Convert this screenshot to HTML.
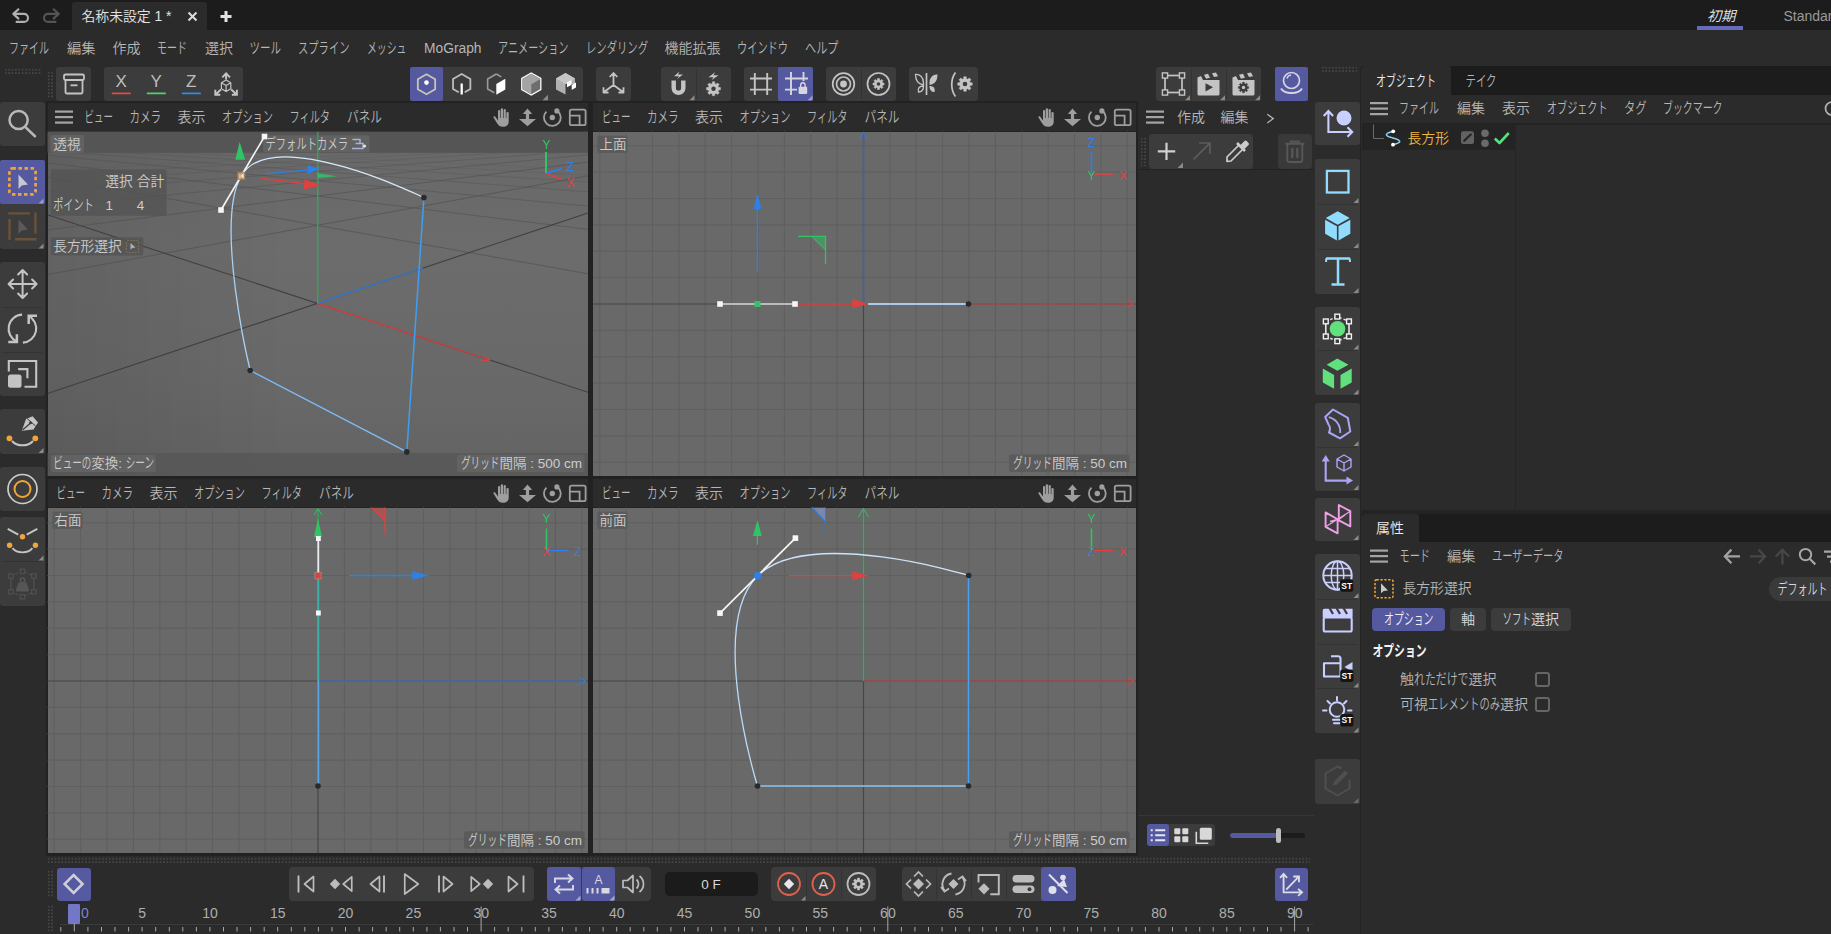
<!DOCTYPE html>
<html lang="ja"><head><meta charset="utf-8"><title>名称未設定 1 * - Cinema 4D</title>
<style>
html,body{margin:0;padding:0;background:#2b2b2b;}
body{width:1831px;height:934px;position:relative;overflow:hidden;font-family:"Liberation Sans","Noto Sans CJK JP",sans-serif;}
#ui div{position:absolute;box-sizing:border-box;}
svg.ov{position:absolute;left:0;top:0;}
svg.ov text{font-family:"Liberation Sans","Noto Sans CJK JP",sans-serif;font-weight:350;}
</style></head><body>
<div id="ui">
<div style="left:0px;top:0px;width:1831px;height:30px;background:#1c1c1c;"></div>
<div style="left:72px;top:2px;width:135px;height:28px;background:#2b2b2b;border-radius:3px 3px 0 0;"></div>
<div style="left:1697px;top:25.8px;width:46px;height:3.8px;background:#676cba;"></div>
<div style="left:56px;top:67px;width:35px;height:33.5px;background:#3c3c3c;border-radius:3px;"></div>
<div style="left:104px;top:67px;width:139px;height:33.5px;background:#3c3c3c;border-radius:3px;"></div>
<div style="left:410px;top:67px;width:173px;height:33.5px;background:#3c3c3c;border-radius:3px;"></div>
<div style="left:410px;top:67px;width:33px;height:33.5px;background:#5459a0;border-radius:2px;"></div>
<div style="left:596px;top:67px;width:35px;height:33.5px;background:#3c3c3c;border-radius:3px;"></div>
<div style="left:661px;top:67px;width:70px;height:33.5px;background:#3c3c3c;border-radius:3px;"></div>
<div style="left:695.5px;top:69px;width:1px;height:29.5px;background:#333;"></div>
<div style="left:744px;top:67px;width:69px;height:33.5px;background:#3c3c3c;border-radius:3px;"></div>
<div style="left:778px;top:67px;width:35px;height:33.5px;background:#5459a0;border-radius:2px;"></div>
<div style="left:826px;top:67px;width:70px;height:33.5px;background:#3c3c3c;border-radius:3px;"></div>
<div style="left:860.5px;top:69px;width:1px;height:29.5px;background:#333;"></div>
<div style="left:909px;top:67px;width:69px;height:33.5px;background:#3c3c3c;border-radius:3px;"></div>
<div style="left:1156px;top:67px;width:105px;height:33.5px;background:#3c3c3c;border-radius:3px;"></div>
<div style="left:1191px;top:69px;width:1px;height:29.5px;background:#333;"></div>
<div style="left:1226px;top:69px;width:1px;height:29.5px;background:#333;"></div>
<div style="left:1275px;top:67px;width:33px;height:33.5px;background:#3c3c3c;border-radius:3px;"></div>
<div style="left:1275px;top:67px;width:33px;height:33.5px;background:#5459a0;border-radius:2px;"></div>
<div style="left:0px;top:102px;width:44.5px;height:43.5px;background:#3c3c3c;border-radius:3px;"></div>
<div style="left:0px;top:160px;width:44.5px;height:89px;background:#3c3c3c;border-radius:3px;"></div>
<div style="left:0px;top:160px;width:44.5px;height:44px;background:#5459a0;border-radius:2px;"></div>
<div style="left:0px;top:262px;width:44.5px;height:134px;background:#3c3c3c;border-radius:3px;"></div>
<div style="left:2px;top:306.5px;width:40px;height:1px;background:#333;"></div>
<div style="left:2px;top:351.5px;width:40px;height:1px;background:#333;"></div>
<div style="left:0px;top:409px;width:44.5px;height:44.5px;background:#3c3c3c;border-radius:3px;"></div>
<div style="left:0px;top:466.5px;width:44.5px;height:44px;background:#3c3c3c;border-radius:3px;"></div>
<div style="left:0px;top:517px;width:44.5px;height:88.5px;background:#3c3c3c;border-radius:3px;"></div>
<div style="left:2px;top:561px;width:40px;height:1px;background:#333;"></div>
<div style="left:1315px;top:102px;width:44.5px;height:43px;background:#3c3c3c;border-radius:3px;"></div>
<div style="left:1315px;top:159px;width:44.5px;height:134.5px;background:#3c3c3c;border-radius:3px;"></div>
<div style="left:1315px;top:306.8px;width:44.5px;height:88.7px;background:#3c3c3c;border-radius:3px;"></div>
<div style="left:1315px;top:402.5px;width:44.5px;height:88px;background:#3c3c3c;border-radius:3px;"></div>
<div style="left:1315px;top:497.5px;width:44.5px;height:43px;background:#3c3c3c;border-radius:3px;"></div>
<div style="left:1315px;top:554px;width:44.5px;height:179px;background:#3c3c3c;border-radius:3px;"></div>
<div style="left:1315px;top:759px;width:44.5px;height:44.5px;background:#3c3c3c;border-radius:3px;"></div>
<div style="left:1317px;top:203.5px;width:40px;height:1px;background:#333;"></div>
<div style="left:1317px;top:248.5px;width:40px;height:1px;background:#333;"></div>
<div style="left:1317px;top:350px;width:40px;height:1px;background:#333;"></div>
<div style="left:1317px;top:446.5px;width:40px;height:1px;background:#333;"></div>
<div style="left:1317px;top:598.5px;width:40px;height:1px;background:#333;"></div>
<div style="left:1317px;top:643.5px;width:40px;height:1px;background:#333;"></div>
<div style="left:1317px;top:688px;width:40px;height:1px;background:#333;"></div>
<div style="left:45.5px;top:101px;width:1092.5px;height:754.8px;background:#222222;"></div>
<div style="left:47.5px;top:103px;width:540.5px;height:28px;background:#2b2b2b;"></div>
<div style="left:47.5px;top:131.5px;width:540.5px;height:344.5px;background:linear-gradient(90deg,rgba(0,0,0,.09) 0%,rgba(0,0,0,0) 45%),linear-gradient(#686868 0%,#6c6c6c 35%,#696969 70%,#636363 100%);"></div>
<div style="left:593px;top:103px;width:542.5px;height:28px;background:#2b2b2b;"></div>
<div style="left:593px;top:131.5px;width:542.5px;height:344.5px;background:#696969;"></div>
<div style="left:47.5px;top:479px;width:540.5px;height:28px;background:#2b2b2b;"></div>
<div style="left:47.5px;top:507.5px;width:540.5px;height:345.5px;background:#696969;"></div>
<div style="left:593px;top:479px;width:542.5px;height:28px;background:#2b2b2b;"></div>
<div style="left:593px;top:507.5px;width:542.5px;height:345.5px;background:#696969;"></div>
<div style="left:1138px;top:103px;width:175.5px;height:754px;background:#2b2b2b;"></div>
<div style="left:1149px;top:134.2px;width:104px;height:34.5px;background:#3c3c3c;border-radius:4px;"></div>
<div style="left:1278px;top:134.2px;width:34px;height:34.5px;background:#393939;border-radius:4px;"></div>
<div style="left:1138px;top:169.3px;width:175.5px;height:1.2px;background:#222;"></div>
<div style="left:1146.8px;top:824.2px;width:68px;height:22.3px;background:#3c3c3c;border-radius:3px;"></div>
<div style="left:1146.8px;top:824.2px;width:22.6px;height:22.3px;background:#5459a0;border-radius:3px;"></div>
<div style="left:1230px;top:833px;width:74.6px;height:5px;background:#1c1c1c;border-radius:2.5px;"></div>
<div style="left:1230px;top:833px;width:47px;height:5px;background:#5459a0;border-radius:2.5px;"></div>
<div style="left:1276px;top:827.8px;width:5px;height:15.2px;background:#bdbdbd;border-radius:2.5px;"></div>
<div style="left:1361.5px;top:66.2px;width:469.5px;height:28.8px;background:#1c1c1c;"></div>
<div style="left:1361.5px;top:66.2px;width:89.5px;height:28.8px;background:#2b2b2b;border-radius:3px 3px 0 0;"></div>
<div style="left:1361.5px;top:123px;width:469.5px;height:1.5px;background:#232323;"></div>
<div style="left:1361.5px;top:124.3px;width:153.5px;height:26.2px;background:#242424;"></div>
<div style="left:1515px;top:125px;width:1px;height:385px;background:#242424;"></div>
<div style="left:1361.5px;top:510px;width:469.5px;height:4px;background:#232323;"></div>
<div style="left:1359.7px;top:66.5px;width:1.8px;height:870px;background:#232323;"></div>
<div style="left:1361.5px;top:514px;width:469.5px;height:28px;background:#1c1c1c;"></div>
<div style="left:1361.5px;top:514px;width:57.5px;height:28px;background:#2b2b2b;border-radius:3px 3px 0 0;"></div>
<div style="left:1768.5px;top:577px;width:80px;height:23.8px;background:#3a3a3a;border-radius:12px;"></div>
<div style="left:1372px;top:608px;width:73px;height:23px;background:#5459a0;border-radius:4px;"></div>
<div style="left:1450px;top:608px;width:36px;height:23px;background:#3c3c3c;border-radius:4px;"></div>
<div style="left:1491px;top:608px;width:80px;height:23px;background:#3c3c3c;border-radius:4px;"></div>
<div style="left:1534.5px;top:671.5px;width:15.5px;height:15.5px;border:2px solid #666;border-radius:3px;background:#2b2b2b"></div>
<div style="left:1534.5px;top:696.5px;width:15.5px;height:15.5px;border:2px solid #666;border-radius:3px;background:#2b2b2b"></div>
<div style="left:57px;top:867.5px;width:33.5px;height:33px;background:#5459a0;border-radius:3px;"></div>
<div style="left:289px;top:867px;width:244.5px;height:34px;background:#3c3c3c;border-radius:4px;"></div>
<div style="left:547px;top:867px;width:104px;height:34px;background:#3c3c3c;border-radius:4px;"></div>
<div style="left:547px;top:867px;width:34px;height:34px;background:#5459a0;border-radius:3px;"></div>
<div style="left:581.5px;top:867px;width:33.5px;height:34px;background:#5459a0;border-radius:3px;"></div>
<div style="left:664.5px;top:872.3px;width:93px;height:23.5px;background:#1b1b1b;border-radius:5px;"></div>
<div style="left:771.3px;top:867px;width:104.3px;height:34px;background:#3c3c3c;border-radius:4px;"></div>
<div style="left:901.5px;top:867px;width:174px;height:34px;background:#3c3c3c;border-radius:4px;"></div>
<div style="left:1041px;top:867px;width:34.5px;height:34px;background:#5459a0;border-radius:3px;"></div>
<div style="left:1275px;top:867.5px;width:33px;height:33px;background:#5459a0;border-radius:3px;"></div>
<div style="left:806px;top:869px;width:1px;height:30px;background:#333;"></div>
<div style="left:841px;top:869px;width:1px;height:30px;background:#333;"></div>
<div style="left:936px;top:869px;width:1px;height:30px;background:#333;"></div>
<div style="left:971px;top:869px;width:1px;height:30px;background:#333;"></div>
<div style="left:1006px;top:869px;width:1px;height:30px;background:#333;"></div>
<div style="left:1138px;top:814.5px;width:175.5px;height:1px;background:#363636;"></div>
<div style="left:60px;top:924px;width:1253px;height:1px;background:#3b3b3b;"></div>
<div style="left:68px;top:904px;width:12px;height:19.5px;background:#7277c6;border-radius:1px;"></div>
<div style="left:4px;top:67.5px;width:38px;height:7.0px;background-image:radial-gradient(circle,#454545 0.9px,transparent 1.1px);background-size:3.4px 3.4px"></div>
<div style="left:47px;top:71px;width:7px;height:27px;background-image:radial-gradient(circle,#454545 0.9px,transparent 1.1px);background-size:3.4px 3.4px"></div>
<div style="left:1321px;top:66px;width:36px;height:7px;background-image:radial-gradient(circle,#454545 0.9px,transparent 1.1px);background-size:3.4px 3.4px"></div>
<div style="left:47px;top:856.6px;width:1263px;height:7.0px;background-image:radial-gradient(circle,#454545 0.9px,transparent 1.1px);background-size:3.4px 3.4px"></div>
<div style="left:47px;top:870px;width:7px;height:28px;background-image:radial-gradient(circle,#454545 0.9px,transparent 1.1px);background-size:3.4px 3.4px"></div>
<div style="left:47px;top:905px;width:7px;height:27px;background-image:radial-gradient(circle,#454545 0.9px,transparent 1.1px);background-size:3.4px 3.4px"></div>
<div style="left:1140px;top:137px;width:6.5px;height:29px;background-image:radial-gradient(circle,#454545 0.9px,transparent 1.1px);background-size:3.4px 3.4px"></div>
</div>
<svg class="ov" width="1831" height="934" viewBox="0 0 1831 934" fill="none">
<rect x="55" y="110.5" width="18" height="2.2" fill="#a4a4a4"/>
<rect x="55" y="116.0" width="18" height="2.2" fill="#a4a4a4"/>
<rect x="55" y="121.5" width="18" height="2.2" fill="#a4a4a4"/>
<path d="M599.8,131.5V476M626.1,131.5V476M652.5,131.5V476M678.9,131.5V476M705.2,131.5V476M731.6,131.5V476M758.0,131.5V476M784.4,131.5V476M810.8,131.5V476M837.1,131.5V476M889.9,131.5V476M916.2,131.5V476M942.6,131.5V476M969.0,131.5V476M995.4,131.5V476M1021.8,131.5V476M1048.1,131.5V476M1074.5,131.5V476M1100.9,131.5V476M1127.2,131.5V476M593,145.8H1135.5M593,172.1H1135.5M593,198.5H1135.5M593,224.9H1135.5M593,251.2H1135.5M593,277.6H1135.5M593,330.4H1135.5M593,356.8H1135.5M593,383.1H1135.5M593,409.5H1135.5M593,435.9H1135.5M593,462.2H1135.5" stroke="#5f5f5f" stroke-width="1" fill="none"/>
<path d="M863.5,131.5V476M593,304H1135.5" stroke="#474747" stroke-width="1.2" fill="none"/>
<path d="M54.2,507.5V853M80.6,507.5V853M107.0,507.5V853M133.4,507.5V853M159.8,507.5V853M186.1,507.5V853M212.5,507.5V853M238.9,507.5V853M265.2,507.5V853M291.6,507.5V853M344.4,507.5V853M370.8,507.5V853M397.1,507.5V853M423.5,507.5V853M449.9,507.5V853M476.2,507.5V853M502.6,507.5V853M529.0,507.5V853M555.4,507.5V853M581.8,507.5V853M47.5,522.8H588M47.5,549.1H588M47.5,575.5H588M47.5,601.9H588M47.5,628.2H588M47.5,654.6H588M47.5,707.4H588M47.5,733.8H588M47.5,760.1H588M47.5,786.5H588M47.5,812.9H588M47.5,839.2H588" stroke="#5f5f5f" stroke-width="1" fill="none"/>
<path d="M318,507.5V853M47.5,681H588" stroke="#474747" stroke-width="1.2" fill="none"/>
<path d="M599.8,507.5V853M626.1,507.5V853M652.5,507.5V853M678.9,507.5V853M705.2,507.5V853M731.6,507.5V853M758.0,507.5V853M784.4,507.5V853M810.8,507.5V853M837.1,507.5V853M889.9,507.5V853M916.2,507.5V853M942.6,507.5V853M969.0,507.5V853M995.4,507.5V853M1021.8,507.5V853M1048.1,507.5V853M1074.5,507.5V853M1100.9,507.5V853M1127.2,507.5V853M593,522.8H1135.5M593,549.1H1135.5M593,575.5H1135.5M593,601.9H1135.5M593,628.2H1135.5M593,654.6H1135.5M593,707.4H1135.5M593,733.8H1135.5M593,760.1H1135.5M593,786.5H1135.5M593,812.9H1135.5M593,839.2H1135.5" stroke="#5f5f5f" stroke-width="1" fill="none"/>
<path d="M863.5,507.5V853M593,681H1135.5" stroke="#474747" stroke-width="1.2" fill="none"/>
<clipPath id="cp"><rect x="47.5" y="131.5" width="540.5" height="344.5"/></clipPath>
<g clip-path="url(#cp)">
<line x1="47.5" y1="177.0" x2="588" y2="273.8" stroke="#505050" stroke-width="1" opacity="0.68"/>
<line x1="47.5" y1="274.6" x2="588" y2="175.9" stroke="#505050" stroke-width="1" opacity="0.68"/>
<line x1="47.5" y1="162.8" x2="588" y2="229.4" stroke="#505050" stroke-width="1" opacity="0.58"/>
<line x1="47.5" y1="229.9" x2="588" y2="162.1" stroke="#505050" stroke-width="1" opacity="0.58"/>
<line x1="47.5" y1="155.4" x2="588" y2="206.1" stroke="#505050" stroke-width="1" opacity="0.48"/>
<line x1="47.5" y1="206.5" x2="588" y2="154.8" stroke="#505050" stroke-width="1" opacity="0.48"/>
<line x1="47.5" y1="150.8" x2="588" y2="191.8" stroke="#505050" stroke-width="1" opacity="0.38"/>
<line x1="47.5" y1="192.1" x2="588" y2="150.4" stroke="#505050" stroke-width="1" opacity="0.38"/>
<line x1="47.5" y1="147.7" x2="588" y2="182.1" stroke="#505050" stroke-width="1" opacity="0.28"/>
<line x1="47.5" y1="182.3" x2="588" y2="147.3" stroke="#505050" stroke-width="1" opacity="0.28"/>
<line x1="47.5" y1="145.5" x2="588" y2="175.1" stroke="#505050" stroke-width="1" opacity="0.18"/>
<line x1="47.5" y1="175.3" x2="588" y2="145.1" stroke="#505050" stroke-width="1" opacity="0.18"/>
<line x1="47.5" y1="143.8" x2="588" y2="169.8" stroke="#505050" stroke-width="1" opacity="0.1"/>
<line x1="47.5" y1="170.0" x2="588" y2="143.5" stroke="#505050" stroke-width="1" opacity="0.1"/>
<line x1="47.5" y1="214.8" x2="588" y2="392.3" stroke="#404040" stroke-width="1.1" opacity="1"/>
<line x1="47.5" y1="393.6" x2="588" y2="212.9" stroke="#404040" stroke-width="1.1" opacity="1"/>
</g>
<rect x="47.5" y="131.5" width="540.5" height="21.3" fill="#555"/>
<rect x="47.5" y="453" width="540.5" height="23" fill="#555" opacity=".75"/>
<rect x="50.5" y="135" width="33.5" height="18" rx="2.5" fill="#626262" opacity="1"/>
<rect x="263" y="135.3" width="106.69999999999999" height="17.0" rx="2.5" fill="#626262" opacity="1"/>
<rect x="51" y="169.5" width="115.5" height="46.19999999999999" rx="2.5" fill="#545454" opacity="0.8"/>
<rect x="51" y="237.3" width="92.30000000000001" height="18.299999999999983" rx="2.5" fill="#545454" opacity="0.8"/>
<rect x="50.8" y="454.7" width="105.00000000000001" height="17.5" rx="2.5" fill="#626262" opacity="1"/>
<rect x="457.0" y="454.6" width="127.5" height="17.5" rx="2.5" fill="#626262" opacity="1"/>
<rect x="1009.0" y="454.6" width="120.5" height="17.5" rx="2.5" fill="#5b5b5b" opacity="1"/>
<rect x="464.0" y="831.3" width="120.5" height="17.5" rx="2.5" fill="#5b5b5b" opacity="1"/>
<rect x="1009.0" y="831.3" width="120.5" height="17.5" rx="2.5" fill="#5b5b5b" opacity="1"/>
<rect x="597.3" y="135.8" width="30.299999999999955" height="17.19999999999999" rx="2.5" fill="#5b5b5b" opacity="1"/>
<rect x="52.3" y="511.8" width="30.299999999999997" height="17.19999999999999" rx="2.5" fill="#5b5b5b" opacity="1"/>
<rect x="597.3" y="511.8" width="30.299999999999955" height="17.19999999999999" rx="2.5" fill="#5b5b5b" opacity="1"/>
<g clip-path="url(#cp)">
<line x1="317.3" y1="303.4" x2="490" y2="360" stroke="#e0413f" stroke-width="1.2"/>
<path d="M483,354.5L490,360L481.5,360.5" stroke="#e0413f" fill="none" stroke-width="1"/>
<line x1="317.3" y1="303.4" x2="423" y2="268" stroke="#2f7fe6" stroke-width="1.2"/>
<line x1="317.8" y1="131.5" x2="317.8" y2="303.4" stroke="#3da45e" stroke-width="1.3"/>
<path d="M241.3,175.8C214.1,221.6 250.2,370.5 250.2,370.5" stroke="#a9d2f7" stroke-width="1.3" fill="none"/>
<path d="M250.2,370.5L406.8,451.9" stroke="#7dbcf5" stroke-width="1.4" fill="none"/>
<path d="M406.8,451.9L423.9,197.6" stroke="#3f9ff2" stroke-width="1.5" fill="none"/>
<path d="M241.3,175.8C272.4,123.1 423.9,197.6 423.9,197.6" stroke="#d4e9fc" stroke-width="1.3" fill="none"/>
<line x1="264.5" y1="136.5" x2="221" y2="210" stroke="#f4f4f4" stroke-width="1.6"/>
<rect x="261.7" y="133.7" width="5.6" height="5.6" fill="#f6f6f6"/>
<rect x="218.2" y="207.2" width="5.6" height="5.6" fill="#f6f6f6"/>
<circle cx="423.9" cy="197.6" r="2.8" fill="#2a2a2a"/>
<circle cx="406.8" cy="451.9" r="2.8" fill="#2a2a2a"/>
<circle cx="250.2" cy="370.5" r="2.8" fill="#2a2a2a"/>
<rect x="237.8" y="172.3" width="7" height="7" fill="#d99a55" stroke="#8f8578" stroke-width="1" opacity=".9"/>
<path d="M239.8,174v4M243.3,174l-2.6,2l2.6,2z" stroke="#f0e0d0" fill="#f0e0d0" stroke-width=".7"/>
<path d="M239.6,141.8L235.4,159.8H245.2Z" fill="#2fc566"/>
<line x1="265" y1="173.9" x2="310" y2="169.9" stroke="#2f7fe6" stroke-width="1.3"/>
<path d="M320,169L307.5,165.3V173.9Z" fill="#2f7fe6"/>
<line x1="261" y1="178.5" x2="306" y2="183.7" stroke="#e0413f" stroke-width="1.3"/>
<path d="M320.6,185.3L304.5,179.2L303.5,189.5Z" fill="#e0413f"/>
<path d="M317.3,173.2L337,176.2L318,178Z" fill="#2fc566" opacity=".85"/>
<path d="M546,173.4V152" stroke="#2fc566" stroke-width="2"/><path d="M546,173.4L561.6,168.5" stroke="#2f7fe6" stroke-width="1.6"/><path d="M546,173.4L561.6,179.3" stroke="#e0413f" stroke-width="1.6"/>
</g>
<line x1="863.5" y1="304" x2="863.5" y2="133" stroke="#2c64cf" stroke-width="1.3"/><path d="M859.5,139L863.5,132.5L867.5,139" stroke="#2f7fe6" fill="none"/>
<line x1="863.5" y1="304" x2="1134" y2="304" stroke="#c44a48" stroke-width="1.2"/><path d="M1127,299.5L1134,304L1127,307.5" stroke="#e0413f" fill="none"/>
<line x1="720" y1="304" x2="795" y2="304" stroke="#dedede" stroke-width="1.5"/>
<line x1="868" y1="304" x2="968.5" y2="304" stroke="#a9c8ea" stroke-width="1.8"/>
<line x1="795" y1="304" x2="858" y2="304" stroke="#e0413f" stroke-width="1.4"/><path d="M868.5,304L852.3,299V308Z" fill="#e0413f"/>
<line x1="757.5" y1="272" x2="757.5" y2="205" stroke="#2f7fe6" stroke-width="1.3"/><path d="M757.5,193L753.6,209H761.4Z" fill="#2f7fe6"/>
<path d="M798,236.3H825.5V264" stroke="#2fc566" stroke-width="1.3" fill="none"/><path d="M811.5,236.3H825.5V250Z" fill="#2fc566" opacity=".45"/><path d="M811.5,236.3L825.5,250" stroke="#2fc566" stroke-width="1"/>
<rect x="717.2" y="301.2" width="5.6" height="5.6" fill="#f6f6f6"/>
<rect x="792.2" y="301.2" width="5.6" height="5.6" fill="#f6f6f6"/>
<rect x="754.5" y="301" width="6" height="6" fill="#2fc566"/>
<circle cx="968.5" cy="304" r="2.8" fill="#2a2a2a"/>
<path d="M1091.5,174V152" stroke="#2f7fe6" stroke-width="1.6"/><path d="M1091.5,174H1113.5" stroke="#e0413f" stroke-width="1.6"/>
<path d="M546.5,550.5V528.5" stroke="#2fc566" stroke-width="1.6"/><path d="M546.5,550.5H568.5" stroke="#2f7fe6" stroke-width="1.6"/>
<path d="M1091.5,550.5V528.5" stroke="#2fc566" stroke-width="1.6"/><path d="M1091.5,550.5H1113.5" stroke="#e0413f" stroke-width="1.6"/>
<line x1="318" y1="681" x2="318" y2="509" stroke="#2fc566" stroke-width="1.2"/><path d="M314,515L318,508.5L322,515" stroke="#2fc566" fill="none"/>
<line x1="318" y1="681" x2="586" y2="681" stroke="#3a78d8" stroke-width="1.2"/><path d="M579,677L586,681L579,685" stroke="#2f7fe6" fill="none"/>
<line x1="318.3" y1="681" x2="318.3" y2="786" stroke="#58a8ea" stroke-width="1.8"/>
<line x1="318.3" y1="575" x2="318.3" y2="681" stroke="#3fb0a8" stroke-width="1.8"/>
<line x1="318.3" y1="538" x2="318.3" y2="575" stroke="#e8eef0" stroke-width="1.8"/>
<path d="M318,518.5L314,537H322Z" fill="#2fc566"/>
<line x1="349" y1="575.5" x2="414" y2="575.5" stroke="#2f7fe6" stroke-width="1.3"/><path d="M429.5,575.5L412.5,571.2V579.8Z" fill="#2f7fe6"/>
<path d="M385,507.5V534.5" stroke="#e0413f" stroke-width="1.3"/><path d="M371.5,507.5H385V521Z" fill="#e0413f" opacity=".5"/><path d="M371.5,507.5L385,521" stroke="#e0413f" stroke-width="1"/>
<rect x="316" y="536.0" width="4.8" height="5" fill="#f6f6f6"/>
<rect x="316" y="610.5" width="4.8" height="5" fill="#f6f6f6"/>
<rect x="314.8" y="572.5" width="6.4" height="6.4" fill="#e0413f" stroke="#999" stroke-width=".6"/>
<circle cx="318" cy="786" r="2.8" fill="#2a2a2a"/>
<line x1="863.5" y1="681" x2="863.5" y2="509" stroke="#2fb05e" stroke-width="1.3"/><path d="M858.5,517L863.5,508.5L868.5,517" stroke="#2fc566" fill="none"/>
<line x1="863.5" y1="681" x2="1134" y2="681" stroke="#c44a48" stroke-width="1.2"/><path d="M1127,677L1134,681L1127,685" stroke="#e0413f" fill="none"/>
<path d="M757.7,575.8C707.2,625.8 757.5,786 757.5,786" stroke="#b9dafa" stroke-width="1.3" fill="none"/>
<path d="M757.5,786H968.5" stroke="#8cc6f5" stroke-width="1.4" fill="none"/>
<path d="M968.5,786V575.5" stroke="#45a3f3" stroke-width="1.5" fill="none"/>
<path d="M757.7,575.8C808,526 968.7,575.5 968.7,575.5" stroke="#cbe4fb" stroke-width="1.3" fill="none"/>
<line x1="795.4" y1="538.1" x2="720" y2="613.1" stroke="#f6f6f6" stroke-width="1.7"/>
<rect x="792.6" y="535.3000000000001" width="5.6" height="5.6" fill="#f8f8f8"/>
<rect x="717.2" y="610.3000000000001" width="5.6" height="5.6" fill="#f8f8f8"/>
<circle cx="968.7" cy="575.5" r="2.8" fill="#2a2a2a"/>
<circle cx="968.5" cy="786" r="2.8" fill="#2a2a2a"/>
<circle cx="757.5" cy="786" r="2.8" fill="#2a2a2a"/>
<circle cx="757.7" cy="575.8" r="3.8" fill="#2f7fe6"/>
<path d="M757.4,520L753,536H761.8Z" fill="#2fc566"/><line x1="757.4" y1="536" x2="757.4" y2="544.7" stroke="#2fc566" stroke-width="1.2"/>
<line x1="788.5" y1="575.7" x2="853" y2="575.7" stroke="#e0413f" stroke-width="1.3"/><path d="M868.8,575.7L852.4,571.3V580.1Z" fill="#e0413f"/>
<path d="M825.3,507.5V534.8" stroke="#3a6fd0" stroke-width="1.3"/><path d="M812.2,507.5H825.3V521.4Z" fill="#8fa8e8" opacity=".5"/><path d="M812.2,507.5L825.3,521.4" stroke="#2f7fe6" stroke-width="1.2"/>
<rect x="1146" y="110.5" width="18" height="2.2" fill="#a4a4a4"/>
<rect x="1146" y="116.0" width="18" height="2.2" fill="#a4a4a4"/>
<rect x="1146" y="121.5" width="18" height="2.2" fill="#a4a4a4"/>
<path d="M1267.3,114.3L1273.3,118.6L1267.3,123" stroke="#b4b4b4" stroke-width="1.3" fill="none"/>
<rect x="1370" y="102.0" width="18" height="2.2" fill="#a4a4a4"/>
<rect x="1370" y="107.5" width="18" height="2.2" fill="#a4a4a4"/>
<rect x="1370" y="113.0" width="18" height="2.2" fill="#a4a4a4"/>
<rect x="1370" y="549.5" width="18" height="2.2" fill="#a4a4a4"/>
<rect x="1370" y="555.0" width="18" height="2.2" fill="#a4a4a4"/>
<rect x="1370" y="560.5" width="18" height="2.2" fill="#a4a4a4"/>
<path d="M60.8,927V931.5M74.3,923.5V931.5M87.9,927V931.5M101.5,927V931.5M115.0,927V931.5M128.6,927V931.5M142.1,927V931.5M155.7,927V931.5M169.3,927V931.5M182.8,927V931.5M196.4,927V931.5M209.9,927V931.5M223.5,927V931.5M237.0,927V931.5M250.6,927V931.5M264.2,927V931.5M277.7,927V931.5M291.3,927V931.5M304.8,927V931.5M318.4,927V931.5M332.0,927V931.5M345.5,927V931.5M359.1,927V931.5M372.6,927V931.5M386.2,927V931.5M399.7,927V931.5M413.3,927V931.5M426.9,927V931.5M440.4,927V931.5M454.0,927V931.5M467.5,927V931.5M481.1,906.5V931.5M494.6,927V931.5M508.2,927V931.5M521.8,927V931.5M535.3,927V931.5M548.9,927V931.5M562.4,927V931.5M576.0,927V931.5M589.6,927V931.5M603.1,927V931.5M616.7,927V931.5M630.2,927V931.5M643.8,927V931.5M657.3,927V931.5M670.9,927V931.5M684.5,927V931.5M698.0,927V931.5M711.6,927V931.5M725.1,927V931.5M738.7,927V931.5M752.2,927V931.5M765.8,927V931.5M779.4,927V931.5M792.9,927V931.5M806.5,927V931.5M820.0,927V931.5M833.6,927V931.5M847.2,927V931.5M860.7,927V931.5M874.3,927V931.5M887.8,906.5V931.5M901.4,927V931.5M914.9,927V931.5M928.5,927V931.5M942.1,927V931.5M955.6,927V931.5M969.2,927V931.5M982.7,927V931.5M996.3,927V931.5M1009.9,927V931.5M1023.4,927V931.5M1037.0,927V931.5M1050.5,927V931.5M1064.1,927V931.5M1077.6,927V931.5M1091.2,927V931.5M1104.8,927V931.5M1118.3,927V931.5M1131.9,927V931.5M1145.4,927V931.5M1159.0,927V931.5M1172.5,927V931.5M1186.1,927V931.5M1199.7,927V931.5M1213.2,927V931.5M1226.8,927V931.5M1240.3,927V931.5M1253.9,927V931.5M1267.5,927V931.5M1281.0,927V931.5M1294.6,906.5V931.5M1308.1,927V931.5" stroke="#a8a8a8" stroke-width="1" fill="none"/>
<path d="M19,8.7L13.3,13.9L19,19.1M13.8,13.9H24a4,4 0 0 1 0,8H15.7" stroke="#b0b0b0" stroke-width="2.1" fill="none" stroke-linejoin="round"/>
<path d="M53,8.7L58.7,13.9L53,19.1M58.2,13.9H48a4,4 0 0 0 0,8H56.3" stroke="#555" stroke-width="2.1" fill="none" stroke-linejoin="round"/>
<path d="M188.5,12.5l8,8M196.5,12.5l-8,8" stroke="#dcdcdc" stroke-width="2"/>
<path d="M220.5,16.5h11M226,11.1v10.8" stroke="#e2e2e2" stroke-width="3"/>
<rect x="64" y="74.5" width="20" height="5.5" rx="1.5" stroke="#c4c4c4" stroke-width="1.8"/><path d="M65.5,80V92.2a1.3,1.3 0 0 0 1.3,1.3H81.2a1.3,1.3 0 0 0 1.3,-1.3V80" stroke="#c4c4c4" stroke-width="1.8"/><path d="M70.5,85.3h7" stroke="#c4c4c4" stroke-width="1.8"/>
<rect x="111.6" y="92.6" width="19.4" height="1.7" rx=".8" fill="#e2494a"/>
<rect x="146.60000000000002" y="92.6" width="19.4" height="1.7" rx=".8" fill="#4fd469"/>
<rect x="181.60000000000002" y="92.6" width="19.4" height="1.7" rx=".8" fill="#2f8ae8"/>
<path d="M226.1,80L230.8,82.8V88.8L226.1,91.6L221.4,88.8V82.8ZM221.4,82.8L226.1,85.6L230.8,82.8M226.1,85.6V91.6" stroke="#c4c4c4" stroke-width="1.2" stroke-linejoin="round"/><path d="M226.1,79.5V74M222.3,77.3L226.1,73.3L229.9,77.3M221,89.5L216,94M215.3,89.8V94.8H220.3M231.2,89.5L236.2,94M236.9,89.8V94.8H231.9" stroke="#c4c4c4" stroke-width="1.9"/>
<g transform="translate(426.5,84.2) scale(1)" ><path d="M0.00,-10.00L8.66,-5.00L8.66,5.00L0.00,10.00L-8.66,5.00L-8.66,-5.00Z" stroke="#c8c4b8" stroke-width="1.8"/><circle cx="0" cy="-1.6" r="2.3" fill="#fff"/></g>
<g transform="translate(461.7,84) scale(1)" ><path d="M3,8.3L8.66,5V-5L0,-10L-8.66,-5V5L-3,8.3" stroke="#bdbdbd" stroke-width="1.8"/><path d="M0,-0.5V10.5" stroke="#fff" stroke-width="2.3"/></g>
<g transform="translate(496.3,84) scale(1)" ><path d="M0,-10L-8.66,-5V5L-2,8.8M0,-10L5,-7.1" stroke="#9a9a9a" stroke-width="1.6"/><path d="M0,0L9,-5.2V5.5L0,10.7Z" fill="#fff"/></g>
<g transform="translate(531.3,84) scale(1)" ><path d="M0.00,-10.20L8.83,-5.10L8.83,5.10L0.00,10.20L-8.83,5.10L-8.83,-5.10Z" fill="#a4a4a4"/><path d="M0,0.3L8.8,-4.8V5.1L0,10.2Z" fill="#6e6e6e"/><path d="M0.00,-11.00L9.53,-5.50L9.53,5.50L0.00,11.00L-9.53,5.50L-9.53,-5.50Z" stroke="#fff" stroke-width="1.3"/></g>
<path d="M548,100.3v-5.5l-5.5,5.5z" fill="#8a8a8a"/>
<g transform="translate(565.5,84) scale(1)" ><path d="M0,-11L9.5,-5.5V0H0V10.5L-9.5,5.5V-5.5Z" fill="#b0b0b0"/><path d="M0,0L9.5,-5.5L0,-11L-9.5,-5.5Z" fill="#c6c6c6"/><path d="M1.5,-1.5L6,-4V1L1.5,3.5ZM6,1L10.5,-1.5V3.5L6,6Z" fill="#fff"/><path d="M1.5,3.5L6,1V6L1.5,8.5Z" fill="#3c3c3c"/></g>
<g transform="translate(613.5,84) scale(1)" ><path d="M0,1V-10.5M-3.8,-7L0,-11L3.8,-7M0,1L-9.5,8M-10,3.3V8.5H-5M0,1L9.5,8M10,3.3V8.5H5" stroke="#c4c4c4" stroke-width="1.8" stroke-linejoin="round"/></g>
<g transform="translate(678.5,85) scale(1)" ><path d="M-7,-4.5V3a7,7 0 0 0 14,0V-4.5H2.6V3a2.6,2.6 0 0 1 -5.2,0V-4.5Z" fill="#c4c4c4"/><path d="M-7.5,-5.5h5.4M2.1,-5.5h5.4" stroke="#3c3c3c" stroke-width="1.2"/><path d="M1,-13.5L-4.5,-8.8H0.5L-1.5,-6L4.5,-10.5H-0.5Z" fill="#c4c4c4"/></g>
<path d="M694.5,100.3v-5l-5,5z" fill="#8a8a8a"/>
<g transform="translate(713.5,88.7) scale(1)" ><path d="M5.03,-1.25L6.91,-1.15L6.91,1.15L5.03,1.25L4.44,2.67L5.70,4.07L4.07,5.70L2.67,4.44L1.25,5.03L1.15,6.91L-1.15,6.91L-1.25,5.03L-2.67,4.44L-4.07,5.70L-5.70,4.07L-4.44,2.67L-5.03,1.25L-6.91,1.15L-6.91,-1.15L-5.03,-1.25L-4.44,-2.67L-5.70,-4.07L-4.07,-5.70L-2.67,-4.44L-1.25,-5.03L-1.15,-6.91L1.15,-6.91L1.25,-5.03L2.67,-4.44L4.07,-5.70L5.70,-4.07L4.44,-2.67Z" fill="#c4c4c4" stroke="#c4c4c4" stroke-width=".6" stroke-linejoin="round"/><circle r="2.24" fill="#3c3c3c"/><path d="M1.5,-16.5L-5,-11.5H0L-2,-8.5L5,-13.5H0Z" fill="#c4c4c4"/></g>
<g transform="translate(761,84) scale(1)" ><path d="M-6.2,-11V11M6.2,-11V11M-11,-5.5H11M-11,5.6H11" stroke="#c4c4c4" stroke-width="1.9"/></g>
<g transform="translate(797,84) scale(1)" ><path d="M-6,-12V11M6.5,-12V-3M-12,-5.5H11M-12,5.6H0" stroke="#d6d6e0" stroke-width="1.9"/><rect x="1.6" y="2.8" width="8.6" height="7.2" rx="1" fill="#d6d6e0"/><path d="M3.7,3V1a2.2,2.2 0 0 1 4.4,0V3" stroke="#d6d6e0" stroke-width="1.4"/></g>
<path d="M812.5,100.3v-5l-5,5z" fill="#9a9cc8"/>
<g transform="translate(843.5,84) scale(1)" ><circle r="10.8" stroke="#c4c4c4" stroke-width="1.7"/><circle r="7" stroke="#c4c4c4" stroke-width="1.7"/><circle r="3.4" fill="#c4c4c4"/></g>
<g transform="translate(878.5,84) scale(1)" ><circle r="11" stroke="#c4c4c4" stroke-width="1.7"/><path d="M4.02,-1.00L5.52,-0.92L5.52,0.92L4.02,1.00L3.55,2.14L4.56,3.26L3.26,4.56L2.14,3.55L1.00,4.02L0.92,5.52L-0.92,5.52L-1.00,4.02L-2.14,3.55L-3.26,4.56L-4.56,3.26L-3.55,2.14L-4.02,1.00L-5.52,0.92L-5.52,-0.92L-4.02,-1.00L-3.55,-2.14L-4.56,-3.26L-3.26,-4.56L-2.14,-3.55L-1.00,-4.02L-0.92,-5.52L0.92,-5.52L1.00,-4.02L2.14,-3.55L3.26,-4.56L4.56,-3.26L3.55,-2.14Z" fill="#c4c4c4" stroke="#c4c4c4" stroke-width=".6" stroke-linejoin="round"/><circle r="1.79" fill="#3c3c3c"/></g>
<g transform="translate(926.5,84) scale(1)" ><path d="M0,-11V11" stroke="#c4c4c4" stroke-width="1.7"/><path d="M3,-1C3,-7 7,-10 11,-9.5C11,-4 9,0 3,1ZM3,2C7,2 9,4 8,8C5,8 3,6 3,2Z" fill="#c4c4c4"/><path d="M-3,-1C-3,-7 -7,-10 -11,-9.5C-11,-4 -9,0 -3,1ZM-3,2C-7,2 -9,4 -8,8C-5,8 -3,6 -3,2Z" stroke="#c4c4c4" stroke-width="1.3"/></g>
<g transform="translate(965,84) scale(1)" ><path d="M5.24,-1.30L7.20,-1.20L7.20,1.20L5.24,1.30L4.63,2.79L5.94,4.24L4.24,5.94L2.79,4.63L1.30,5.24L1.20,7.20L-1.20,7.20L-1.30,5.24L-2.79,4.63L-4.24,5.94L-5.94,4.24L-4.63,2.79L-5.24,1.30L-7.20,1.20L-7.20,-1.20L-5.24,-1.30L-4.63,-2.79L-5.94,-4.24L-4.24,-5.94L-2.79,-4.63L-1.30,-5.24L-1.20,-7.20L1.20,-7.20L1.30,-5.24L2.79,-4.63L4.24,-5.94L5.94,-4.24L4.63,-2.79Z" fill="#c4c4c4" stroke="#c4c4c4" stroke-width=".6" stroke-linejoin="round"/><circle r="2.34" fill="#3c3c3c"/><path d="M-9.5,-11.5C-14.5,-5 -14.5,6 -9.5,12.5" stroke="#c4c4c4" stroke-width="1.7"/></g>
<g transform="translate(1173.5,84) scale(1)" ><rect x="-8.5" y="-8.5" width="17" height="17" stroke="#c4c4c4" stroke-width="1.7"/><rect x="-11.1" y="-11.1" width="5.2" height="5.2" fill="#3c3c3c" stroke="#c4c4c4" stroke-width="1.4"/><rect x="-11.1" y="5.9" width="5.2" height="5.2" fill="#3c3c3c" stroke="#c4c4c4" stroke-width="1.4"/><rect x="5.9" y="-11.1" width="5.2" height="5.2" fill="#3c3c3c" stroke="#c4c4c4" stroke-width="1.4"/><rect x="5.9" y="5.9" width="5.2" height="5.2" fill="#3c3c3c" stroke="#c4c4c4" stroke-width="1.4"/></g>
<path d="M1190,100.3v-5l-5,5z" fill="#8a8a8a"/>
<g transform="translate(1208.5,84.5) scale(1)" ><path d="M-11,-4.5H11V9.5a1.5,1.5 0 0 1 -1.5,1.5H-9.5a1.5,1.5 0 0 1 -1.5,-1.5Z" fill="#c4c4c4"/><path d="M-11,-5.5V-8.5L-7.5,-10L-5.5,-6ZM-4.5,-11.2L-0.5,-12.3L1.5,-8.3L-2.5,-7.2ZM3.5,-12.8L7.5,-13.6L9.5,-9.8L5.5,-9Z" fill="#c4c4c4" transform="translate(0,1.5)"/><path d="M-3,-1.3V7L4.5,2.8Z" fill="#3c3c3c"/></g>
<path d="M1225,100.3v-5l-5,5z" fill="#8a8a8a"/>
<g transform="translate(1243.5,84.5) scale(1)" ><path d="M-11,-4.5H11V9.5a1.5,1.5 0 0 1 -1.5,1.5H-9.5a1.5,1.5 0 0 1 -1.5,-1.5Z" fill="#c4c4c4"/><path d="M-11,-5.5V-8.5L-7.5,-10L-5.5,-6ZM-4.5,-11.2L-0.5,-12.3L1.5,-8.3L-2.5,-7.2ZM3.5,-12.8L7.5,-13.6L9.5,-9.8L5.5,-9Z" fill="#c4c4c4" transform="translate(0,1.5)"/><g transform="translate(0,3)"><path d="M3.73,-0.93L5.13,-0.85L5.13,0.85L3.73,0.93L3.30,1.98L4.23,3.02L3.02,4.23L1.98,3.30L0.93,3.73L0.85,5.13L-0.85,5.13L-0.93,3.73L-1.98,3.30L-3.02,4.23L-4.23,3.02L-3.30,1.98L-3.73,0.93L-5.13,0.85L-5.13,-0.85L-3.73,-0.93L-3.30,-1.98L-4.23,-3.02L-3.02,-4.23L-1.98,-3.30L-0.93,-3.73L-0.85,-5.13L0.85,-5.13L0.93,-3.73L1.98,-3.30L3.02,-4.23L4.23,-3.02L3.30,-1.98Z" fill="#3c3c3c" stroke="#3c3c3c" stroke-width=".6" stroke-linejoin="round"/><circle r="1.70" fill="#c4c4c4"/></g></g>
<path d="M1260,100.3v-5l-5,5z" fill="#8a8a8a"/>
<g transform="translate(1291.5,83) scale(1)" ><circle cy="-2.5" r="8" stroke="#d4d4e0" stroke-width="1.7"/><path d="M-4.5,-4.5a4.5,4.5 0 0 1 4,-3.5" stroke="#d4d4e0" stroke-width="1.4"/><path d="M-10.5,5.5C-7,11.5 7,11.5 10.5,5.5" stroke="#d4d4e0" stroke-width="1.9"/></g>
<g transform="translate(493.4,117.4) scale(1)" ><path d="M4.6,1.5V-6.3a1.05,1.05 0 0 1 2.1,0V0.5H7.3V-7.9a1.15,1.15 0 0 1 2.3,0V0.5H10.2V-7.3a1.1,1.1 0 0 1 2.2,0V0.8H13V-4.3a1.15,1.15 0 0 1 2.3,0V4C15.3,7.5 13,9.4 9.5,9.4C6.5,9.4 4.8,8 3.2,5.2L0.1,0.2C-0.3,-0.9 1,-1.6 1.9,-0.6L4.6,3Z" fill="#9e9e9e"/></g>
<g transform="translate(527.5,117.3) scale(1)" ><path d="M0,-8.7L4.7,-3.3H1.6V1.8H8.5L0,9L-8.5,1.8H-1.6V-3.3H-4.7Z" fill="#9e9e9e"/></g>
<g transform="translate(552.3,117.5) scale(1)" ><path d="M5.6,-6.3A8.4,8.4 0 1 1 -5.9,-5.9" stroke="#9e9e9e" stroke-width="1.8"/><circle cx="4.6" cy="-6.6" r="2.6" fill="#9e9e9e"/><circle r="2.7" fill="#9e9e9e"/></g>
<g transform="translate(577.7,117.4) scale(1)" ><rect x="-7.9" y="-7.8" width="15.8" height="15.6" rx="1.8" stroke="#9e9e9e" stroke-width="1.8"/><path d="M-7.9,-1.8H1.9V7.8" stroke="#9e9e9e" stroke-width="1.8"/></g>
<g transform="translate(1038.4,117.4) scale(1)" ><path d="M4.6,1.5V-6.3a1.05,1.05 0 0 1 2.1,0V0.5H7.3V-7.9a1.15,1.15 0 0 1 2.3,0V0.5H10.2V-7.3a1.1,1.1 0 0 1 2.2,0V0.8H13V-4.3a1.15,1.15 0 0 1 2.3,0V4C15.3,7.5 13,9.4 9.5,9.4C6.5,9.4 4.8,8 3.2,5.2L0.1,0.2C-0.3,-0.9 1,-1.6 1.9,-0.6L4.6,3Z" fill="#9e9e9e"/></g>
<g transform="translate(1072.5,117.3) scale(1)" ><path d="M0,-8.7L4.7,-3.3H1.6V1.8H8.5L0,9L-8.5,1.8H-1.6V-3.3H-4.7Z" fill="#9e9e9e"/></g>
<g transform="translate(1097.3,117.5) scale(1)" ><path d="M5.6,-6.3A8.4,8.4 0 1 1 -5.9,-5.9" stroke="#9e9e9e" stroke-width="1.8"/><circle cx="4.6" cy="-6.6" r="2.6" fill="#9e9e9e"/><circle r="2.7" fill="#9e9e9e"/></g>
<g transform="translate(1122.7,117.4) scale(1)" ><rect x="-7.9" y="-7.8" width="15.8" height="15.6" rx="1.8" stroke="#9e9e9e" stroke-width="1.8"/><path d="M-7.9,-1.8H1.9V7.8" stroke="#9e9e9e" stroke-width="1.8"/></g>
<g transform="translate(493.4,493.4) scale(1)" ><path d="M4.6,1.5V-6.3a1.05,1.05 0 0 1 2.1,0V0.5H7.3V-7.9a1.15,1.15 0 0 1 2.3,0V0.5H10.2V-7.3a1.1,1.1 0 0 1 2.2,0V0.8H13V-4.3a1.15,1.15 0 0 1 2.3,0V4C15.3,7.5 13,9.4 9.5,9.4C6.5,9.4 4.8,8 3.2,5.2L0.1,0.2C-0.3,-0.9 1,-1.6 1.9,-0.6L4.6,3Z" fill="#9e9e9e"/></g>
<g transform="translate(527.5,493.3) scale(1)" ><path d="M0,-8.7L4.7,-3.3H1.6V1.8H8.5L0,9L-8.5,1.8H-1.6V-3.3H-4.7Z" fill="#9e9e9e"/></g>
<g transform="translate(552.3,493.5) scale(1)" ><path d="M5.6,-6.3A8.4,8.4 0 1 1 -5.9,-5.9" stroke="#9e9e9e" stroke-width="1.8"/><circle cx="4.6" cy="-6.6" r="2.6" fill="#9e9e9e"/><circle r="2.7" fill="#9e9e9e"/></g>
<g transform="translate(577.7,493.4) scale(1)" ><rect x="-7.9" y="-7.8" width="15.8" height="15.6" rx="1.8" stroke="#9e9e9e" stroke-width="1.8"/><path d="M-7.9,-1.8H1.9V7.8" stroke="#9e9e9e" stroke-width="1.8"/></g>
<g transform="translate(1038.4,493.4) scale(1)" ><path d="M4.6,1.5V-6.3a1.05,1.05 0 0 1 2.1,0V0.5H7.3V-7.9a1.15,1.15 0 0 1 2.3,0V0.5H10.2V-7.3a1.1,1.1 0 0 1 2.2,0V0.8H13V-4.3a1.15,1.15 0 0 1 2.3,0V4C15.3,7.5 13,9.4 9.5,9.4C6.5,9.4 4.8,8 3.2,5.2L0.1,0.2C-0.3,-0.9 1,-1.6 1.9,-0.6L4.6,3Z" fill="#9e9e9e"/></g>
<g transform="translate(1072.5,493.3) scale(1)" ><path d="M0,-8.7L4.7,-3.3H1.6V1.8H8.5L0,9L-8.5,1.8H-1.6V-3.3H-4.7Z" fill="#9e9e9e"/></g>
<g transform="translate(1097.3,493.5) scale(1)" ><path d="M5.6,-6.3A8.4,8.4 0 1 1 -5.9,-5.9" stroke="#9e9e9e" stroke-width="1.8"/><circle cx="4.6" cy="-6.6" r="2.6" fill="#9e9e9e"/><circle r="2.7" fill="#9e9e9e"/></g>
<g transform="translate(1122.7,493.4) scale(1)" ><rect x="-7.9" y="-7.8" width="15.8" height="15.6" rx="1.8" stroke="#9e9e9e" stroke-width="1.8"/><path d="M-7.9,-1.8H1.9V7.8" stroke="#9e9e9e" stroke-width="1.8"/></g>
<circle cx="18.6" cy="120" r="9.1" stroke="#b8b8b8" stroke-width="2.5"/><path d="M25.4,127.1L35,136.2" stroke="#b8b8b8" stroke-width="2.6" stroke-linecap="round"/>
<g transform="translate(22.5,181.4) scale(1)" ><rect x="-13.1" y="-13" width="26.2" height="26" rx="3" stroke="#f2a43c" stroke-width="2.7" stroke-dasharray="3.5 2.55"/><path d="M-4,-7V7.5L-0.8,4L5.5,3Z" fill="#c8c8cc"/></g>
<path d="M43.5,203.5v-5l-5,5z" fill="#9a9cc8"/>
<g transform="translate(22.5,227) scale(1)" ><path d="M-14.2,-13.6H7.5M12.9,-14.5V6.5M-7.5,12.3H14M-13,-8V13" stroke="#6a5238" stroke-width="2.4"/><path d="M-4,-7.5V7L-0.8,3.5L5.5,2.5Z" fill="#5a5a5a"/></g>
<path d="M43.5,248.5v-5l-5,5z" fill="#8a8a8a"/>
<g transform="translate(22.6,284) scale(1)" ><path d="M0,-13.5V13.5M-13.5,0H13.5M-4.5,-9.5L0,-14L4.5,-9.5M-4.5,9.5L0,14L4.5,9.5M-9.5,-4.5L-14,0L-9.5,4.5M9.5,-4.5L14,0L9.5,4.5" stroke="#c4c4c4" stroke-width="2" stroke-linejoin="round" stroke-linecap="round"/></g>
<path d="M22.1,314.6A14.1,14.1 0 0 0 16.6,341.4M22.9,342.6A14.1,14.1 0 0 0 28.4,315.9" stroke="#c4c4c4" stroke-width="2.1"/><path d="M16.9,334.2V342H8.3M37,315.8H28.7V323.9" stroke="#c4c4c4" stroke-width="2.5"/>
<path d="M8.8,371.5V361H36.2V386.7H24.5M18.2,369.1H27.4V378.2" stroke="#c4c4c4" stroke-width="2.1"/><rect x="8" y="374.5" width="13.5" height="13.3" rx="2.5" fill="#c4c4c4"/>
<path d="M12,441C17,446.8 28,446.8 33,441" stroke="#c4c4c4" stroke-width="2"/><circle cx="9.4" cy="438.3" r="2.9" fill="#f2a43c"/><circle cx="35.3" cy="438.3" r="2.9" fill="#f2a43c"/><path d="M21.8,430.8L26,419L32.6,416.2L38,422.5L33.5,429.5Z" fill="#c4c4c4"/><path d="M22.5,430L30.3,423.2" stroke="#3c3c3c" stroke-width="1.2"/><circle cx="30.6" cy="422.8" r="1.5" fill="#3c3c3c"/><path d="M27.2,418.7L35.6,426" stroke="#3c3c3c" stroke-width="1"/>
<path d="M43.5,453v-5l-5,5z" fill="#8a8a8a"/>
<g transform="translate(22.5,489) scale(1)" ><circle r="14.5" stroke="#cdcdcd" stroke-width="1.7"/><circle r="8" stroke="#f2a43c" stroke-width="2"/></g>
<path d="M7.7,528.8L18.3,534.7M37.3,528.8L26.7,534.7" stroke="#c4c4c4" stroke-width="1.9"/><path d="M12.5,548.2C17,553.8 28,553.8 32.4,548.2" stroke="#c4c4c4" stroke-width="1.9"/><circle cx="22.5" cy="536.7" r="2.7" fill="#f2a43c"/><circle cx="9.6" cy="545.2" r="2.7" fill="#f2a43c"/><circle cx="35.4" cy="545.2" r="2.7" fill="#f2a43c"/>
<path d="M43.5,560.5v-5l-5,5z" fill="#8a8a8a"/>
<path d="M10.9,576V591.8M33.8,576V591.8" stroke="#505050" stroke-width="1.3"/><path d="M10.9,576L22.5,571.3L33.8,576M10.9,591.8L22.5,596.7L33.8,591.8" stroke="#505050" stroke-width="1.2" stroke-dasharray="2.6 2.2"/><rect x="20.3" y="569.0999999999999" width="4.4" height="4.4" fill="#3c3c3c" stroke="#505050" stroke-width="1.2"/><rect x="31.599999999999998" y="573.8" width="4.4" height="4.4" fill="#3c3c3c" stroke="#505050" stroke-width="1.2"/><rect x="31.599999999999998" y="589.5999999999999" width="4.4" height="4.4" fill="#3c3c3c" stroke="#505050" stroke-width="1.2"/><rect x="20.3" y="594.5" width="4.4" height="4.4" fill="#3c3c3c" stroke="#505050" stroke-width="1.2"/><rect x="8.7" y="589.5999999999999" width="4.4" height="4.4" fill="#3c3c3c" stroke="#505050" stroke-width="1.2"/><rect x="8.7" y="573.8" width="4.4" height="4.4" fill="#3c3c3c" stroke="#505050" stroke-width="1.2"/><path d="M18.6,582.5H26.4L29,589.5a1.5,1.5 0 0 1 -1.5,2H17.5a1.5,1.5 0 0 1 -1.5,-2Z" fill="#565656"/><circle cx="22.5" cy="580.3" r="2.3" stroke="#565656" stroke-width="1.4"/>
<path d="M1328.4,112V132H1351M1323.7,116L1328.4,111L1333.1,116M1347.5,127.3L1352.2,132L1347.5,136.7" stroke="#c9cfff" stroke-width="2.1"/><circle cx="1344" cy="118" r="7.5" fill="#c9cfff"/>
<g transform="translate(1337.7,181.7) scale(1)" ><rect x="-10.8" y="-10.8" width="21.6" height="21.6" stroke="#8fdcff" stroke-width="2.3"/></g>
<path d="M1358.5,203v-5l-5,5z" fill="#8a8a8a"/>
<g transform="translate(1337.7,226) scale(1)" ><path d="M0,-14.8L12,-8L0,-1.2L-12,-8Z" fill="#8fdcff"/><path d="M-12.6,-6.3L-0.8,0.3V14.5L-12.6,7.8ZM12.6,-6.3L0.8,0.3V14.5L12.6,7.8Z" fill="#8fdcff"/></g>
<path d="M1358.5,248v-5l-5,5z" fill="#8a8a8a"/>
<g transform="translate(1338.0,271.5) scale(1)" ><path d="M-12,-13H12M0,-13V13M-6.5,13H6.5" stroke="#8fdcff" stroke-width="2.5"/><path d="M-11.9,-13V-9.5M11.9,-13V-9.5" stroke="#8fdcff" stroke-width="2"/></g>
<path d="M1358.5,293v-5l-5,5z" fill="#8a8a8a"/>
<circle cx="1337.5" cy="328.8" r="7.8" fill="#62e07e"/><path d="M1325.8,321.4V336.4M1349,321.4V336.4" stroke="#e6e6e6" stroke-width="1.6"/><path d="M1325.8,321.4L1337.3,316.6L1349,321.4M1325.8,336.4L1337.3,341.2L1349,336.4" stroke="#e6e6e6" stroke-width="1.4" stroke-dasharray="2.6 2.2"/><rect x="1334.8999999999999" y="314.20000000000005" width="4.8" height="4.8" fill="#3c3c3c" stroke="#f2f2f2" stroke-width="1.4"/><rect x="1346.6" y="319.0" width="4.8" height="4.8" fill="#3c3c3c" stroke="#f2f2f2" stroke-width="1.4"/><rect x="1346.6" y="334.0" width="4.8" height="4.8" fill="#3c3c3c" stroke="#f2f2f2" stroke-width="1.4"/><rect x="1334.8999999999999" y="338.8" width="4.8" height="4.8" fill="#3c3c3c" stroke="#f2f2f2" stroke-width="1.4"/><rect x="1323.3999999999999" y="334.0" width="4.8" height="4.8" fill="#3c3c3c" stroke="#f2f2f2" stroke-width="1.4"/><rect x="1323.3999999999999" y="319.0" width="4.8" height="4.8" fill="#3c3c3c" stroke="#f2f2f2" stroke-width="1.4"/>
<path d="M1358.5,349.5v-5l-5,5z" fill="#8a8a8a"/>
<path d="M1337.3,358.6L1348.5,364.7L1337.3,370.8L1326.6,364.7ZM1322.8,368.5L1334.1,374.9V388.8L1322.8,382.4ZM1351.7,368.5L1340.5,374.9V388.8L1351.7,382.4Z" fill="#62e07e"/>
<path d="M1358.5,394.5v-5l-5,5z" fill="#8a8a8a"/>
<path d="M1333,409.5L1347.8,417.8L1350.3,431.5L1340,438.3L1329,432.5C1331,428.5 1330,426.5 1328.5,424.5L1325.2,417Z" stroke="#aaa4f5" stroke-width="2" stroke-linejoin="round"/><path d="M1328.8,417.2C1336,419 1340.5,425 1340.3,433" stroke="#aaa4f5" stroke-width="1.8"/>
<path d="M1358.5,446v-5l-5,5z" fill="#8a8a8a"/>
<path d="M1325.7,459V480.6H1348" stroke="#aaa4f5" stroke-width="2.1"/><path d="M1325.7,455L1321.7,461.5H1329.7ZM1353,480.6L1346.5,476.6V484.6Z" fill="#aaa4f5"/><path d="M1344,455L1351,459V467L1344,471L1337,467V459ZM1337,459L1344,463L1351,459M1344,463V471" stroke="#aaa4f5" stroke-width="1.4" stroke-linejoin="round"/>
<path d="M1358.5,490v-5l-5,5z" fill="#8a8a8a"/>
<path d="M1325.6,512.4L1337.6,519.3V533.3L1325.6,526.8ZM1338.8,505L1350.3,511.2V526.4L1338.8,520.4Z" stroke="#f0a0e6" stroke-width="1.9" stroke-linejoin="round"/><path d="M1326,526.5L1350,511.5M1330,521.5L1337.5,519.5M1338.8,519.5L1345,515" stroke="#f0a0e6" stroke-width="1.3"/>
<path d="M1358.5,540v-5l-5,5z" fill="#8a8a8a"/>
<g transform="translate(1337.5,576.5) scale(1)" ><circle cx="0" cy="-1" r="14.2" stroke="#c9cfff" stroke-width="2"/><ellipse cx="0" cy="-1" rx="6.3" ry="14.2" stroke="#c9cfff" stroke-width="1.5"/><path d="M0,-15V13M-14,-1H14M-12.5,-8H12.5M-12.5,6H12.5" stroke="#c9cfff" stroke-width="1.5"/><rect x="2.5" y="2.8" width="13.3" height="12.5" rx="2.5" fill="#141414"/></g>
<path d="M1358.5,598v-5l-5,5z" fill="#8a8a8a"/>
<rect x="1323.7" y="617.5" width="28" height="14" rx="1.5" stroke="#c9cfff" stroke-width="2.1"/><path d="M1322.7,617.5V610.5a1.7,1.7 0 0 1 1.7,-1.7H1352.6V617.5Z" fill="#c9cfff"/><path d="M1329.5,608L1333,614M1336.5,608L1340,614M1343.5,608L1347,614" stroke="#3c3c3c" stroke-width="2.2"/>
<path d="M1331,656.3H1338a2.5,2.5 0 0 1 2.5,2.5V663M1324,663.3H1340.5V676.5H1324Z" stroke="#c9cfff" stroke-width="2.1" stroke-linejoin="round"/><path d="M1344.5,667L1352.5,662V672Z" fill="#c9cfff"/><rect x="1340.2" y="669.5" width="13.3" height="12.5" rx="2.5" fill="#141414"/>
<path d="M1358.5,687.5v-5l-5,5z" fill="#8a8a8a"/>
<circle cx="1337" cy="709.5" r="7.3" stroke="#c9cfff" stroke-width="2"/><path d="M1337,697V700.5M1327.5,701L1330,703.5M1346.5,701L1344,703.5M1323,710.5H1326.5M1348,710.5H1351.5M1333,719.7H1341M1334,723.2H1340" stroke="#c9cfff" stroke-width="2" stroke-linecap="round"/><rect x="1340.2" y="714" width="13.3" height="12.5" rx="2.5" fill="#141414"/>
<path d="M1358.5,732.5v-5l-5,5z" fill="#8a8a8a"/>
<g transform="translate(1337.5,781) scale(1)" ><path d="M4,-12.5L0,-14.5L-12,-7.5V7.5L0,14.5L12,7.5V-1" stroke="#4f4f4f" stroke-width="2" stroke-linejoin="round"/><path d="M-4.5,4.5L-3.5,0.5L7.5,-10.5L10.5,-7.5L-0.5,3.5Z" fill="#4f4f4f"/></g>
<path d="M1358.5,803v-5l-5,5z" fill="#6a6a6a"/>
<g transform="translate(1166.5,151.4) scale(1)" ><path d="M-8.7,0H8.7M0,-8.7V8.7" stroke="#d0d0d0" stroke-width="2.2"/></g>
<path d="M1183,168v-5.5l-5.5,5.5z" fill="#8a8a8a"/>
<g transform="translate(1201.6,151.3) scale(1)" ><path d="M-8,8L8,-8M-2.5,-8.3H8.3V2.5" stroke="#5c5c5c" stroke-width="1.7"/></g>
<g transform="translate(1236.5,151.5) scale(1)" ><path d="M-9.5,10V5.5L2.5,-6.5L6.5,-2.5L-5.5,9.5Z" stroke="#cdcdcd" stroke-width="1.7" stroke-linejoin="round"/><path d="M0.5,-8.5L8.5,-0.5" stroke="#cdcdcd" stroke-width="2.6"/><path d="M4,-6.5L8,-10.5a1.6,1.6 0 0 1 2.2,0L12,-8.6a1.6,1.6 0 0 1 0,2.2L8,-2.5Z" fill="#cdcdcd"/></g>
<g transform="translate(1294.8,152) scale(1)" ><path d="M-7.5,-8V8a2,2 0 0 0 2,2H5.5a2,2 0 0 0 2,-2V-8M-9.5,-8.3H9.5M-4,-8.5V-10.5H4V-8.5" stroke="#575757" stroke-width="1.9"/><path d="M-2.5,-4V6M2.5,-4V6" stroke="#575757" stroke-width="2.2"/></g>
<g transform="translate(1158.2,835.3) scale(1)" ><path d="M-3,-5H7M-3,0H7M-3,5H7" stroke="#e6e6f0" stroke-width="2"/><path d="M-7.5,-5h2M-7.5,0h2M-7.5,5h2" stroke="#e6e6f0" stroke-width="2"/></g>
<g transform="translate(1181.3,835.3) scale(1)" ><rect x="-7" y="-7" width="6" height="6" rx="1" fill="#d8d8d8"/><rect x="-7" y="1" width="6" height="6" rx="1" fill="#d8d8d8"/><rect x="1" y="-7" width="6" height="6" rx="1" fill="#d8d8d8"/><rect x="1" y="1" width="6" height="6" rx="1" fill="#d8d8d8"/></g>
<g transform="translate(1203.8,835.3) scale(1)" ><rect x="-4" y="-7.5" width="12" height="12" rx="1.5" fill="#d8d8d8"/><path d="M-7.5,-3.5V8H4.5" stroke="#d8d8d8" stroke-width="1.6"/></g>
<path d="M1373.5,124.5V138.5H1384" stroke="#6a6a6a" stroke-width="1"/>
<g transform="translate(1393,138) scale(1)" ><path d="M0,-6.5C-9,-4.5 -8.5,-2 0,0C9,2.5 9,4.5 0,6.6" stroke="#8fd0f5" stroke-width="1.6"/><circle cx="0.2" cy="-6.7" r="1.9" fill="#fff"/><circle cx="0" cy="6.7" r="1.9" fill="#fff"/></g>
<rect x="1461" y="131.3" width="13" height="12.7" rx="2.2" fill="#626262"/><path d="M1464.2,140.8L1470.8,134.5" stroke="#242424" stroke-width="2.2" stroke-linecap="round"/>
<circle cx="1485" cy="133.3" r="3.8" fill="#6a6a6a"/><circle cx="1485" cy="143.3" r="3.8" fill="#6a6a6a"/>
<path d="M1494.8,138.5L1499.5,143L1508.8,133" stroke="#55e07a" stroke-width="2.6" stroke-linejoin="round"/>
<g transform="translate(1832,108.5) scale(1)" ><circle r="6.5" stroke="#b0b0b0" stroke-width="1.8"/></g>
<g transform="translate(1732.2,556.4) scale(1)" ><path d="M7.8,0H-6.5M-0.8,-6.8L-7.3,0L-0.8,6.8" stroke="#a2a2a2" stroke-width="2.3"/></g>
<g transform="translate(1757.8,556.4) scale(1)" ><path d="M-7.8,0H6.5M0.8,-6.8L7.3,0L0.8,6.8" stroke="#474747" stroke-width="2.3"/></g>
<g transform="translate(1782.4,557.1) scale(1)" ><path d="M0,7.5V-6.3M-6.8,-0.6L0,-7.2L6.8,-0.6" stroke="#474747" stroke-width="2.3"/></g>
<circle cx="1805.5" cy="554.6" r="5.7" stroke="#a6a6a6" stroke-width="2"/><path d="M1809.7,558.8L1815.3,564.4" stroke="#a6a6a6" stroke-width="2.2"/>
<path d="M1824,551.7H1836M1827,556.7H1836M1830,561.7H1836" stroke="#a6a6a6" stroke-width="2.2"/>
<g transform="translate(1384,588.8) scale(1)" ><rect x="-9" y="-9" width="18" height="18" rx="1.5" stroke="#f5a53a" stroke-width="1.5" stroke-dasharray="2.3 1.6"/><path d="M-3,-5.5V4.5L-0.3,2.2L4,1.8Z" fill="#c8c8c8"/></g>
<g transform="translate(132.5,246.6) scale(1)" ><rect x="-6" y="-6" width="12" height="12" rx="1" stroke="#b08a5a" stroke-width="1" stroke-dasharray="1.6 1.4" opacity=".55"/><path d="M-2,-3.5V3L0,1.5L3,1Z" fill="#b0b0b0"/></g>
<g transform="translate(358.5,144) scale(1)" ><path d="M-6,-4.5H1.5V-1M-6.5,4.5H4.5V-0.5H-3" stroke="#aab4d8" stroke-width="1.4"/><circle cx="6" cy="2" r="1.6" fill="#e8e8e8"/></g>
<g transform="translate(73.6,884) scale(1)" ><path d="M0,-9L9,0L0,9L-9,0Z" stroke="#cfcfd6" stroke-width="2.5"/></g>
<g transform="translate(306,884) scale(1)" ><path d="M-7.5,-8.5V8.5" stroke="#bcbcbc" stroke-width="1.9"/><path d="M7.5,-7.5L-1.5,0L7.5,7.5Z" stroke="#bcbcbc" stroke-width="1.7" stroke-linejoin="round"/></g>
<g transform="translate(342,884) scale(1)" ><path d="M-7,-5.2L-1.8,0L-7,5.2L-12.2,0Z" fill="#bcbcbc"/><path d="M9.75,-7.2L1.25,0L9.75,7.2Z" stroke="#bcbcbc" stroke-width="1.7" stroke-linejoin="round"/></g>
<g transform="translate(377,884) scale(1)" ><path d="M2.5,-7.5L-6.5,0L2.5,7.5Z" stroke="#bcbcbc" stroke-width="1.7" stroke-linejoin="round"/><path d="M7,-8.5V8.5" stroke="#bcbcbc" stroke-width="1.9"/></g>
<g transform="translate(411.5,884) scale(1)" ><path d="M-6.75,-10L6.75,0L-6.75,10Z" stroke="#bcbcbc" stroke-width="1.7" stroke-linejoin="round"/></g>
<g transform="translate(446,884) scale(1)" ><path d="M-2.5,-7.5L6.5,0L-2.5,7.5Z" stroke="#bcbcbc" stroke-width="1.7" stroke-linejoin="round"/><path d="M-7,-8.5V8.5" stroke="#bcbcbc" stroke-width="1.9"/></g>
<g transform="translate(481,884) scale(1)" ><path d="M7,-5.2L12.2,0L7,5.2L1.8,0Z" fill="#bcbcbc"/><path d="M-9.75,-7.2L-1.25,0L-9.75,7.2Z" stroke="#bcbcbc" stroke-width="1.7" stroke-linejoin="round"/></g>
<g transform="translate(516,884) scale(1)" ><path d="M-7.5,-7.5L1.5,0L-7.5,7.5Z" stroke="#bcbcbc" stroke-width="1.7" stroke-linejoin="round"/><path d="M7.5,-8.5V8.5" stroke="#bcbcbc" stroke-width="1.9"/></g>
<g transform="translate(564,884) scale(1)" ><path d="M-9,-1V-5.5H8M4,-9.5L8.5,-5.5L4,-1.5M9,1V5.5H-8M-4,1.5L-8.5,5.5L-4,9.5" stroke="#d8d8e4" stroke-width="1.9"/></g>
<path d="M580.5,900.5v-5l-5,5z" fill="#a4a6cc"/>
<path d="M587.5,888v5.5M592.5,888v5.5M597.5,888v5.5" stroke="#d8d8e4" stroke-width="2"/><rect x="601.5" y="888" width="8" height="5.5" fill="#d8d8e4"/>
<path d="M614.5,900.5v-5l-5,5z" fill="#a4a6cc"/>
<g transform="translate(632.5,884) scale(1)" ><path d="M-9.5,-3.5H-5L0.5,-8.5V8.5L-5,3.5H-9.5Z" stroke="#bcbcbc" stroke-width="1.7" stroke-linejoin="round"/><path d="M4,-4.5a6,6 0 0 1 0,9M7,-8a10,10 0 0 1 0,16" stroke="#bcbcbc" stroke-width="1.7"/></g>
<g transform="translate(789,884) scale(1)" ><circle r="11" stroke="#e0604e" stroke-width="1.8"/><path d="M0,-5.2L5.2,0L0,5.2L-5.2,0Z" fill="#e8e8e8"/></g>
<path d="M805.5,900.5v-4.5l-4.5,4.5z" fill="#8a8a8a"/>
<g transform="translate(823.5,884) scale(1)" ><circle r="11" stroke="#e0604e" stroke-width="1.8"/></g>
<g transform="translate(858.5,884) scale(1)" ><circle r="11" stroke="#bcbcbc" stroke-width="1.8"/><path d="M4.31,-1.07L5.92,-0.99L5.92,0.99L4.31,1.07L3.80,2.29L4.88,3.49L3.49,4.88L2.29,3.80L1.07,4.31L0.99,5.92L-0.99,5.92L-1.07,4.31L-2.29,3.80L-3.49,4.88L-4.88,3.49L-3.80,2.29L-4.31,1.07L-5.92,0.99L-5.92,-0.99L-4.31,-1.07L-3.80,-2.29L-4.88,-3.49L-3.49,-4.88L-2.29,-3.80L-1.07,-4.31L-0.99,-5.92L0.99,-5.92L1.07,-4.31L2.29,-3.80L3.49,-4.88L4.88,-3.49L3.80,-2.29Z" fill="#c4c4c4" stroke="#c4c4c4" stroke-width=".6" stroke-linejoin="round"/><circle r="1.92" fill="#3c3c3c"/></g>
<g transform="translate(918.5,884) scale(1)" ><path d="M0,-5.5L5.5,0L0,5.5L-5.5,0Z" fill="#bcbcbc"/><path d="M-4.5,-7.5L0,-12L4.5,-7.5M-4.5,7.5L0,12L4.5,7.5M-7.5,-4.5L-12,0L-7.5,4.5M7.5,-4.5L12,0L7.5,4.5" stroke="#bcbcbc" stroke-width="1.7"/></g>
<g transform="translate(953.5,884) scale(1)" ><path d="M0,-5L5,0L0,5L-5,0Z" fill="#bcbcbc"/><path d="M-2,-10.5A10.8,10.8 0 0 0 -9,6.5M2,10.5A10.8,10.8 0 0 0 9,-6.5" stroke="#bcbcbc" stroke-width="1.8"/><path d="M-12.5,3L-9,7.5L-4.5,4.5M12.5,-3L9,-7.5L4.5,-4.5" stroke="#bcbcbc" stroke-width="1.8"/></g>
<path d="M978.5,882.5V875H998.8V894.3H990.3" stroke="#bcbcbc" stroke-width="1.9"/><path d="M984,883.2L989.6,888.8L984,894.4L978.4,888.8Z" fill="#bcbcbc"/>
<g transform="translate(1023.5,884) scale(1)" ><rect x="-11" y="-9" width="22" height="7.5" rx="3.7" fill="#bcbcbc"/><rect x="-11" y="1.5" width="22" height="7.5" rx="3.7" fill="#bcbcbc"/><circle cx="6" cy="5.2" r="2" fill="#3c3c3c"/></g>
<g transform="translate(1058,884) scale(1)" ><path d="M-9,-9.5L9.5,9" stroke="#e0e0ea" stroke-width="2"/><circle cx="-5.5" cy="6" r="4" fill="#e0e0ea"/><circle cx="5" cy="-6.5" r="2.8" fill="#e0e0ea"/><path d="M-1,2L6,-5L9,3Z" fill="#e0e0ea"/></g>
<g transform="translate(1291.5,884) scale(0.88)" ><path d="M-9,-11V9.5H11.5M-13,-7L-9,-11.5L-5,-7M7.5,5.5L12,9.5L7.5,13.5M-6,6.5L8,-8M2,-8.5H8.5V-2" stroke="#dcdce6" stroke-width="2.1"/></g>
</svg>
<svg class="ov" width="1831" height="934" viewBox="0 0 1831 934">
<text x="81.5" y="20.8" font-size="14" fill="#e4e4e4" xml:space="preserve"><tspan textLength="69.2" lengthAdjust="spacingAndGlyphs">名称未設定</tspan><tspan textLength="20.8" lengthAdjust="spacingAndGlyphs"> 1 *</tspan></text>
<text x="1707.0" y="20.8" font-size="14" fill="#e8e8e8" font-style="italic" xml:space="preserve"><tspan textLength="28.5" lengthAdjust="spacingAndGlyphs">初期</tspan></text>
<text x="1783.5" y="20.8" font-size="14" fill="#9a9a9a" xml:space="preserve"><tspan textLength="56.8" lengthAdjust="spacingAndGlyphs">Standard</tspan></text>
<text x="9.0" y="52.8" font-size="14" fill="#b6b6b6" xml:space="preserve"><tspan font-size="15.3" textLength="40.0" lengthAdjust="spacingAndGlyphs">ファイル</tspan></text>
<text x="67.0" y="52.8" font-size="14" fill="#b6b6b6" xml:space="preserve"><tspan textLength="28.5" lengthAdjust="spacingAndGlyphs">編集</tspan></text>
<text x="112.5" y="52.8" font-size="14" fill="#b6b6b6" xml:space="preserve"><tspan textLength="28.0" lengthAdjust="spacingAndGlyphs">作成</tspan></text>
<text x="157.0" y="52.8" font-size="14" fill="#b6b6b6" xml:space="preserve"><tspan font-size="15.3" textLength="30.0" lengthAdjust="spacingAndGlyphs">モード</tspan></text>
<text x="205.0" y="52.8" font-size="14" fill="#b6b6b6" xml:space="preserve"><tspan textLength="28.0" lengthAdjust="spacingAndGlyphs">選択</tspan></text>
<text x="249.5" y="52.8" font-size="14" fill="#b6b6b6" xml:space="preserve"><tspan font-size="15.3" textLength="31.5" lengthAdjust="spacingAndGlyphs">ツール</tspan></text>
<text x="298.0" y="52.8" font-size="14" fill="#b6b6b6" xml:space="preserve"><tspan font-size="15.3" textLength="51.5" lengthAdjust="spacingAndGlyphs">スプライン</tspan></text>
<text x="367.0" y="52.8" font-size="14" fill="#b6b6b6" xml:space="preserve"><tspan font-size="15.3" textLength="39.5" lengthAdjust="spacingAndGlyphs">メッシュ</tspan></text>
<text x="424.0" y="52.8" font-size="14" fill="#b6b6b6" xml:space="preserve"><tspan textLength="57.5" lengthAdjust="spacingAndGlyphs">MoGraph</tspan></text>
<text x="498.0" y="52.8" font-size="14" fill="#b6b6b6" xml:space="preserve"><tspan font-size="15.3" textLength="70.5" lengthAdjust="spacingAndGlyphs">アニメーション</tspan></text>
<text x="586.0" y="52.8" font-size="14" fill="#b6b6b6" xml:space="preserve"><tspan font-size="15.3" textLength="62.0" lengthAdjust="spacingAndGlyphs">レンダリング</tspan></text>
<text x="664.5" y="52.8" font-size="14" fill="#b6b6b6" xml:space="preserve"><tspan textLength="56.0" lengthAdjust="spacingAndGlyphs">機能拡張</tspan></text>
<text x="737.0" y="52.8" font-size="14" fill="#b6b6b6" xml:space="preserve"><tspan font-size="15.3" textLength="51.0" lengthAdjust="spacingAndGlyphs">ウインドウ</tspan></text>
<text x="805.0" y="52.8" font-size="14" fill="#b6b6b6" xml:space="preserve"><tspan font-size="15.3" textLength="33.5" lengthAdjust="spacingAndGlyphs">ヘルプ</tspan></text>
<text x="84.5" y="121.8" font-size="14" fill="#b6b6b6" xml:space="preserve"><tspan font-size="15.3" textLength="28.5" lengthAdjust="spacingAndGlyphs">ビュー</tspan></text>
<text x="129.5" y="121.8" font-size="14" fill="#b6b6b6" xml:space="preserve"><tspan font-size="15.3" textLength="31.5" lengthAdjust="spacingAndGlyphs">カメラ</tspan></text>
<text x="177.5" y="121.8" font-size="14" fill="#b6b6b6" xml:space="preserve"><tspan textLength="28.0" lengthAdjust="spacingAndGlyphs">表示</tspan></text>
<text x="222.0" y="121.8" font-size="14" fill="#b6b6b6" xml:space="preserve"><tspan font-size="15.3" textLength="51.0" lengthAdjust="spacingAndGlyphs">オプション</tspan></text>
<text x="289.5" y="121.8" font-size="14" fill="#b6b6b6" xml:space="preserve"><tspan font-size="15.3" textLength="40.5" lengthAdjust="spacingAndGlyphs">フィルタ</tspan></text>
<text x="347.0" y="121.8" font-size="14" fill="#b6b6b6" xml:space="preserve"><tspan font-size="15.3" textLength="35.0" lengthAdjust="spacingAndGlyphs">パネル</tspan></text>
<text x="602.0" y="121.8" font-size="14" fill="#b6b6b6" xml:space="preserve"><tspan font-size="15.3" textLength="28.5" lengthAdjust="spacingAndGlyphs">ビュー</tspan></text>
<text x="647.0" y="121.8" font-size="14" fill="#b6b6b6" xml:space="preserve"><tspan font-size="15.3" textLength="31.5" lengthAdjust="spacingAndGlyphs">カメラ</tspan></text>
<text x="695.0" y="121.8" font-size="14" fill="#b6b6b6" xml:space="preserve"><tspan textLength="28.0" lengthAdjust="spacingAndGlyphs">表示</tspan></text>
<text x="739.5" y="121.8" font-size="14" fill="#b6b6b6" xml:space="preserve"><tspan font-size="15.3" textLength="51.0" lengthAdjust="spacingAndGlyphs">オプション</tspan></text>
<text x="807.0" y="121.8" font-size="14" fill="#b6b6b6" xml:space="preserve"><tspan font-size="15.3" textLength="40.5" lengthAdjust="spacingAndGlyphs">フィルタ</tspan></text>
<text x="864.5" y="121.8" font-size="14" fill="#b6b6b6" xml:space="preserve"><tspan font-size="15.3" textLength="35.0" lengthAdjust="spacingAndGlyphs">パネル</tspan></text>
<text x="56.5" y="497.8" font-size="14" fill="#b6b6b6" xml:space="preserve"><tspan font-size="15.3" textLength="28.5" lengthAdjust="spacingAndGlyphs">ビュー</tspan></text>
<text x="101.5" y="497.8" font-size="14" fill="#b6b6b6" xml:space="preserve"><tspan font-size="15.3" textLength="31.5" lengthAdjust="spacingAndGlyphs">カメラ</tspan></text>
<text x="149.5" y="497.8" font-size="14" fill="#b6b6b6" xml:space="preserve"><tspan textLength="28.0" lengthAdjust="spacingAndGlyphs">表示</tspan></text>
<text x="194.0" y="497.8" font-size="14" fill="#b6b6b6" xml:space="preserve"><tspan font-size="15.3" textLength="51.0" lengthAdjust="spacingAndGlyphs">オプション</tspan></text>
<text x="261.5" y="497.8" font-size="14" fill="#b6b6b6" xml:space="preserve"><tspan font-size="15.3" textLength="40.5" lengthAdjust="spacingAndGlyphs">フィルタ</tspan></text>
<text x="319.0" y="497.8" font-size="14" fill="#b6b6b6" xml:space="preserve"><tspan font-size="15.3" textLength="35.0" lengthAdjust="spacingAndGlyphs">パネル</tspan></text>
<text x="602.0" y="497.8" font-size="14" fill="#b6b6b6" xml:space="preserve"><tspan font-size="15.3" textLength="28.5" lengthAdjust="spacingAndGlyphs">ビュー</tspan></text>
<text x="647.0" y="497.8" font-size="14" fill="#b6b6b6" xml:space="preserve"><tspan font-size="15.3" textLength="31.5" lengthAdjust="spacingAndGlyphs">カメラ</tspan></text>
<text x="695.0" y="497.8" font-size="14" fill="#b6b6b6" xml:space="preserve"><tspan textLength="28.0" lengthAdjust="spacingAndGlyphs">表示</tspan></text>
<text x="739.5" y="497.8" font-size="14" fill="#b6b6b6" xml:space="preserve"><tspan font-size="15.3" textLength="51.0" lengthAdjust="spacingAndGlyphs">オプション</tspan></text>
<text x="807.0" y="497.8" font-size="14" fill="#b6b6b6" xml:space="preserve"><tspan font-size="15.3" textLength="40.5" lengthAdjust="spacingAndGlyphs">フィルタ</tspan></text>
<text x="864.5" y="497.8" font-size="14" fill="#b6b6b6" xml:space="preserve"><tspan font-size="15.3" textLength="35.0" lengthAdjust="spacingAndGlyphs">パネル</tspan></text>
<text x="53.2" y="149.0" font-size="13.5" fill="#cccccc" xml:space="preserve"><tspan textLength="27.5" lengthAdjust="spacingAndGlyphs">透視</tspan></text>
<text x="265.5" y="148.7" font-size="13.5" fill="#cccccc" xml:space="preserve"><tspan font-size="14.7" textLength="82.5" lengthAdjust="spacingAndGlyphs">デフォルトカメラ</tspan></text>
<text x="105.3" y="185.7" font-size="13.5" fill="#cccccc" xml:space="preserve"><tspan textLength="27.5" lengthAdjust="spacingAndGlyphs">選択</tspan></text>
<text x="136.7" y="185.7" font-size="13.5" fill="#cccccc" xml:space="preserve"><tspan textLength="27.5" lengthAdjust="spacingAndGlyphs">合計</tspan></text>
<text x="53.2" y="209.5" font-size="13.5" fill="#cccccc" xml:space="preserve"><tspan font-size="14.7" textLength="40.5" lengthAdjust="spacingAndGlyphs">ポイント</tspan></text>
<text x="105.5" y="209.5" font-size="13.5" fill="#cccccc" xml:space="preserve"><tspan textLength="7.5" lengthAdjust="spacingAndGlyphs">1</tspan></text>
<text x="136.7" y="209.5" font-size="13.5" fill="#cccccc" xml:space="preserve"><tspan textLength="7.5" lengthAdjust="spacingAndGlyphs">4</tspan></text>
<text x="53.2" y="251.3" font-size="13.5" fill="#cccccc" xml:space="preserve"><tspan textLength="68.5" lengthAdjust="spacingAndGlyphs">長方形選択</tspan></text>
<text x="53.2" y="468.0" font-size="13.5" fill="#cccccc" xml:space="preserve"><tspan font-size="14.7" textLength="38.0" lengthAdjust="spacingAndGlyphs">ビューの</tspan><tspan textLength="27.0" lengthAdjust="spacingAndGlyphs">変換</tspan><tspan textLength="7.5" lengthAdjust="spacingAndGlyphs">: </tspan><tspan font-size="14.7" textLength="28.5" lengthAdjust="spacingAndGlyphs">シーン</tspan></text>
<text x="461.0" y="468.0" font-size="13.5" fill="#cccccc" xml:space="preserve"><tspan font-size="14.7" textLength="38.5" lengthAdjust="spacingAndGlyphs">グリッド</tspan><tspan textLength="27.0" lengthAdjust="spacingAndGlyphs">間隔</tspan><tspan textLength="55.5" lengthAdjust="spacingAndGlyphs"> : 500 cm</tspan></text>
<text x="1013.0" y="468.0" font-size="13.5" fill="#cccccc" xml:space="preserve"><tspan font-size="14.7" textLength="39.0" lengthAdjust="spacingAndGlyphs">グリッド</tspan><tspan textLength="27.0" lengthAdjust="spacingAndGlyphs">間隔</tspan><tspan textLength="48.0" lengthAdjust="spacingAndGlyphs"> : 50 cm</tspan></text>
<text x="468.0" y="844.7" font-size="13.5" fill="#cccccc" xml:space="preserve"><tspan font-size="14.7" textLength="39.0" lengthAdjust="spacingAndGlyphs">グリッド</tspan><tspan textLength="27.0" lengthAdjust="spacingAndGlyphs">間隔</tspan><tspan textLength="48.0" lengthAdjust="spacingAndGlyphs"> : 50 cm</tspan></text>
<text x="1013.0" y="844.7" font-size="13.5" fill="#cccccc" xml:space="preserve"><tspan font-size="14.7" textLength="39.0" lengthAdjust="spacingAndGlyphs">グリッド</tspan><tspan textLength="27.0" lengthAdjust="spacingAndGlyphs">間隔</tspan><tspan textLength="48.0" lengthAdjust="spacingAndGlyphs"> : 50 cm</tspan></text>
<text x="599.5" y="149.1" font-size="13.5" fill="#cccccc" xml:space="preserve"><tspan textLength="27.0" lengthAdjust="spacingAndGlyphs">上面</tspan></text>
<text x="54.5" y="525.1" font-size="13.5" fill="#cccccc" xml:space="preserve"><tspan textLength="27.0" lengthAdjust="spacingAndGlyphs">右面</tspan></text>
<text x="599.5" y="525.1" font-size="13.5" fill="#cccccc" xml:space="preserve"><tspan textLength="27.0" lengthAdjust="spacingAndGlyphs">前面</tspan></text>
<text x="542.5" y="149.1" font-size="12" fill="#2fc566" xml:space="preserve"><tspan textLength="8.0" lengthAdjust="spacingAndGlyphs">Y</tspan></text>
<text x="566.8" y="171.1" font-size="12" fill="#2f7fe6" xml:space="preserve"><tspan textLength="7.3" lengthAdjust="spacingAndGlyphs">Z</tspan></text>
<text x="566.5" y="187.1" font-size="12" fill="#e0413f" xml:space="preserve"><tspan textLength="8.0" lengthAdjust="spacingAndGlyphs">X</tspan></text>
<text x="1087.8" y="146.6" font-size="12" fill="#2f7fe6" xml:space="preserve"><tspan textLength="7.3" lengthAdjust="spacingAndGlyphs">Z</tspan></text>
<text x="1119.0" y="179.6" font-size="12" fill="#e0413f" xml:space="preserve"><tspan textLength="8.0" lengthAdjust="spacingAndGlyphs">X</tspan></text>
<text x="1087.5" y="179.6" font-size="12" fill="#2fc566" xml:space="preserve"><tspan textLength="8.0" lengthAdjust="spacingAndGlyphs">Y</tspan></text>
<text x="542.5" y="523.1" font-size="12" fill="#2fc566" xml:space="preserve"><tspan textLength="8.0" lengthAdjust="spacingAndGlyphs">Y</tspan></text>
<text x="574.3" y="556.1" font-size="12" fill="#2f7fe6" xml:space="preserve"><tspan textLength="7.3" lengthAdjust="spacingAndGlyphs">Z</tspan></text>
<text x="542.5" y="556.1" font-size="12" fill="#e0413f" xml:space="preserve"><tspan textLength="8.0" lengthAdjust="spacingAndGlyphs">X</tspan></text>
<text x="1087.5" y="523.1" font-size="12" fill="#2fc566" xml:space="preserve"><tspan textLength="8.0" lengthAdjust="spacingAndGlyphs">Y</tspan></text>
<text x="1119.0" y="556.1" font-size="12" fill="#e0413f" xml:space="preserve"><tspan textLength="8.0" lengthAdjust="spacingAndGlyphs">X</tspan></text>
<text x="1087.8" y="556.1" font-size="12" fill="#2f7fe6" xml:space="preserve"><tspan textLength="7.3" lengthAdjust="spacingAndGlyphs">Z</tspan></text>
<text x="1177.0" y="121.8" font-size="14" fill="#b6b6b6" xml:space="preserve"><tspan textLength="28.0" lengthAdjust="spacingAndGlyphs">作成</tspan></text>
<text x="1220.5" y="121.8" font-size="14" fill="#b6b6b6" xml:space="preserve"><tspan textLength="28.0" lengthAdjust="spacingAndGlyphs">編集</tspan></text>
<text x="1376.0" y="85.8" font-size="14" fill="#ececec" xml:space="preserve"><tspan font-size="15.3" textLength="60.0" lengthAdjust="spacingAndGlyphs">オブジェクト</tspan></text>
<text x="1465.5" y="85.8" font-size="14" fill="#b4b4b4" xml:space="preserve"><tspan font-size="15.3" textLength="31.0" lengthAdjust="spacingAndGlyphs">テイク</tspan></text>
<text x="1399.0" y="113.3" font-size="14" fill="#b6b6b6" xml:space="preserve"><tspan font-size="15.3" textLength="40.0" lengthAdjust="spacingAndGlyphs">ファイル</tspan></text>
<text x="1457.0" y="113.3" font-size="14" fill="#b6b6b6" xml:space="preserve"><tspan textLength="28.0" lengthAdjust="spacingAndGlyphs">編集</tspan></text>
<text x="1502.0" y="113.3" font-size="14" fill="#b6b6b6" xml:space="preserve"><tspan textLength="28.0" lengthAdjust="spacingAndGlyphs">表示</tspan></text>
<text x="1547.0" y="113.3" font-size="14" fill="#b6b6b6" xml:space="preserve"><tspan font-size="15.3" textLength="60.5" lengthAdjust="spacingAndGlyphs">オブジェクト</tspan></text>
<text x="1624.0" y="113.3" font-size="14" fill="#b6b6b6" xml:space="preserve"><tspan font-size="15.3" textLength="22.5" lengthAdjust="spacingAndGlyphs">タグ</tspan></text>
<text x="1663.0" y="113.3" font-size="14" fill="#b6b6b6" xml:space="preserve"><tspan font-size="15.3" textLength="59.5" lengthAdjust="spacingAndGlyphs">ブックマーク</tspan></text>
<text x="1407.5" y="142.8" font-size="14" fill="#f2b53c" xml:space="preserve"><tspan textLength="41.5" lengthAdjust="spacingAndGlyphs">長方形</tspan></text>
<text x="1376.0" y="533.3" font-size="14" fill="#ececec" xml:space="preserve"><tspan textLength="28.0" lengthAdjust="spacingAndGlyphs">属性</tspan></text>
<text x="1399.5" y="560.8" font-size="14" fill="#b6b6b6" xml:space="preserve"><tspan font-size="15.3" textLength="30.5" lengthAdjust="spacingAndGlyphs">モード</tspan></text>
<text x="1447.0" y="560.8" font-size="14" fill="#b6b6b6" xml:space="preserve"><tspan textLength="28.5" lengthAdjust="spacingAndGlyphs">編集</tspan></text>
<text x="1492.0" y="560.8" font-size="14" fill="#b6b6b6" xml:space="preserve"><tspan font-size="15.3" textLength="71.5" lengthAdjust="spacingAndGlyphs">ユーザーデータ</tspan></text>
<text x="1402.5" y="593.3" font-size="14" fill="#b6b6b6" xml:space="preserve"><tspan textLength="69.0" lengthAdjust="spacingAndGlyphs">長方形選択</tspan></text>
<text x="1777.5" y="593.8" font-size="14" fill="#d8d8d8" xml:space="preserve"><tspan font-size="15.3" textLength="50.0" lengthAdjust="spacingAndGlyphs">デフォルト</tspan></text>
<text x="1384.0" y="624.3" font-size="14" fill="#f0f0f0" xml:space="preserve"><tspan font-size="15.3" textLength="49.5" lengthAdjust="spacingAndGlyphs">オプション</tspan></text>
<text x="1461.0" y="624.3" font-size="14" fill="#d8d8d8" xml:space="preserve"><tspan textLength="14.0" lengthAdjust="spacingAndGlyphs">軸</tspan></text>
<text x="1502.5" y="624.3" font-size="14" fill="#d8d8d8" xml:space="preserve"><tspan font-size="15.3" textLength="28.5" lengthAdjust="spacingAndGlyphs">ソフト</tspan><tspan textLength="28.0" lengthAdjust="spacingAndGlyphs">選択</tspan></text>
<text x="1372.5" y="655.8" font-size="14" fill="#f4f4f4" style="font-weight:700" xml:space="preserve"><tspan font-size="15.3" textLength="54.0" lengthAdjust="spacingAndGlyphs">オプション</tspan></text>
<text x="1400.0" y="683.6" font-size="14" fill="#b6b6b6" xml:space="preserve"><tspan textLength="14.0" lengthAdjust="spacingAndGlyphs">触</tspan><tspan font-size="15.3" textLength="54.5" lengthAdjust="spacingAndGlyphs">れただけで</tspan><tspan textLength="28.0" lengthAdjust="spacingAndGlyphs">選択</tspan></text>
<text x="1400.0" y="708.6" font-size="14" fill="#b6b6b6" xml:space="preserve"><tspan textLength="28.0" lengthAdjust="spacingAndGlyphs">可視</tspan><tspan font-size="15.3" textLength="72.0" lengthAdjust="spacingAndGlyphs">エレメントのみ</tspan><tspan textLength="28.0" lengthAdjust="spacingAndGlyphs">選択</tspan></text>
<text x="701.2" y="888.7" font-size="13.5" fill="#d8d8d8" xml:space="preserve"><tspan textLength="19.5" lengthAdjust="spacingAndGlyphs">0 F</tspan></text>
<text x="138.3" y="918.0" font-size="14" fill="#aeaeae" xml:space="preserve"><tspan textLength="7.8" lengthAdjust="spacingAndGlyphs">5</tspan></text>
<text x="202.2" y="918.0" font-size="14" fill="#aeaeae" xml:space="preserve"><tspan textLength="15.6" lengthAdjust="spacingAndGlyphs">10</tspan></text>
<text x="270.0" y="918.0" font-size="14" fill="#aeaeae" xml:space="preserve"><tspan textLength="15.6" lengthAdjust="spacingAndGlyphs">15</tspan></text>
<text x="337.8" y="918.0" font-size="14" fill="#aeaeae" xml:space="preserve"><tspan textLength="15.6" lengthAdjust="spacingAndGlyphs">20</tspan></text>
<text x="405.6" y="918.0" font-size="14" fill="#aeaeae" xml:space="preserve"><tspan textLength="15.6" lengthAdjust="spacingAndGlyphs">25</tspan></text>
<text x="473.4" y="918.0" font-size="14" fill="#aeaeae" xml:space="preserve"><tspan textLength="15.6" lengthAdjust="spacingAndGlyphs">30</tspan></text>
<text x="541.2" y="918.0" font-size="14" fill="#aeaeae" xml:space="preserve"><tspan textLength="15.6" lengthAdjust="spacingAndGlyphs">35</tspan></text>
<text x="609.0" y="918.0" font-size="14" fill="#aeaeae" xml:space="preserve"><tspan textLength="15.6" lengthAdjust="spacingAndGlyphs">40</tspan></text>
<text x="676.8" y="918.0" font-size="14" fill="#aeaeae" xml:space="preserve"><tspan textLength="15.6" lengthAdjust="spacingAndGlyphs">45</tspan></text>
<text x="744.6" y="918.0" font-size="14" fill="#aeaeae" xml:space="preserve"><tspan textLength="15.6" lengthAdjust="spacingAndGlyphs">50</tspan></text>
<text x="812.4" y="918.0" font-size="14" fill="#aeaeae" xml:space="preserve"><tspan textLength="15.6" lengthAdjust="spacingAndGlyphs">55</tspan></text>
<text x="880.1" y="918.0" font-size="14" fill="#aeaeae" xml:space="preserve"><tspan textLength="15.6" lengthAdjust="spacingAndGlyphs">60</tspan></text>
<text x="947.9" y="918.0" font-size="14" fill="#aeaeae" xml:space="preserve"><tspan textLength="15.6" lengthAdjust="spacingAndGlyphs">65</tspan></text>
<text x="1015.7" y="918.0" font-size="14" fill="#aeaeae" xml:space="preserve"><tspan textLength="15.6" lengthAdjust="spacingAndGlyphs">70</tspan></text>
<text x="1083.5" y="918.0" font-size="14" fill="#aeaeae" xml:space="preserve"><tspan textLength="15.6" lengthAdjust="spacingAndGlyphs">75</tspan></text>
<text x="1151.3" y="918.0" font-size="14" fill="#aeaeae" xml:space="preserve"><tspan textLength="15.6" lengthAdjust="spacingAndGlyphs">80</tspan></text>
<text x="1219.1" y="918.0" font-size="14" fill="#aeaeae" xml:space="preserve"><tspan textLength="15.6" lengthAdjust="spacingAndGlyphs">85</tspan></text>
<text x="1286.9" y="918.0" font-size="14" fill="#aeaeae" xml:space="preserve"><tspan textLength="15.6" lengthAdjust="spacingAndGlyphs">90</tspan></text>
<text x="81.1" y="918.0" font-size="14" fill="#7f84d2" xml:space="preserve"><tspan textLength="7.8" lengthAdjust="spacingAndGlyphs">0</tspan></text>
<text x="115.6" y="87.2" font-size="17" fill="#bcbcbc" xml:space="preserve"><tspan textLength="11.3" lengthAdjust="spacingAndGlyphs">X</tspan></text>
<text x="150.6" y="87.2" font-size="17" fill="#bcbcbc" xml:space="preserve"><tspan textLength="11.3" lengthAdjust="spacingAndGlyphs">Y</tspan></text>
<text x="186.1" y="87.2" font-size="17" fill="#bcbcbc" xml:space="preserve"><tspan textLength="10.4" lengthAdjust="spacingAndGlyphs">Z</tspan></text>
<text x="1341.3" y="588.6" font-size="8.5" fill="#fff" style="font-weight:700" xml:space="preserve"><tspan textLength="10.9" lengthAdjust="spacingAndGlyphs">ST</tspan></text>
<text x="1341.5" y="678.8" font-size="8.5" fill="#fff" style="font-weight:700" xml:space="preserve"><tspan textLength="10.9" lengthAdjust="spacingAndGlyphs">ST</tspan></text>
<text x="1341.5" y="723.3" font-size="8.5" fill="#fff" style="font-weight:700" xml:space="preserve"><tspan textLength="10.9" lengthAdjust="spacingAndGlyphs">ST</tspan></text>
<text x="594.5" y="883.6" font-size="12" fill="#d8d8e4" xml:space="preserve"><tspan textLength="8.0" lengthAdjust="spacingAndGlyphs">A</tspan></text>
<text x="818.8" y="888.8" font-size="14" fill="#e8e8e8" xml:space="preserve"><tspan textLength="9.3" lengthAdjust="spacingAndGlyphs">A</tspan></text>
</svg>
</body></html>
